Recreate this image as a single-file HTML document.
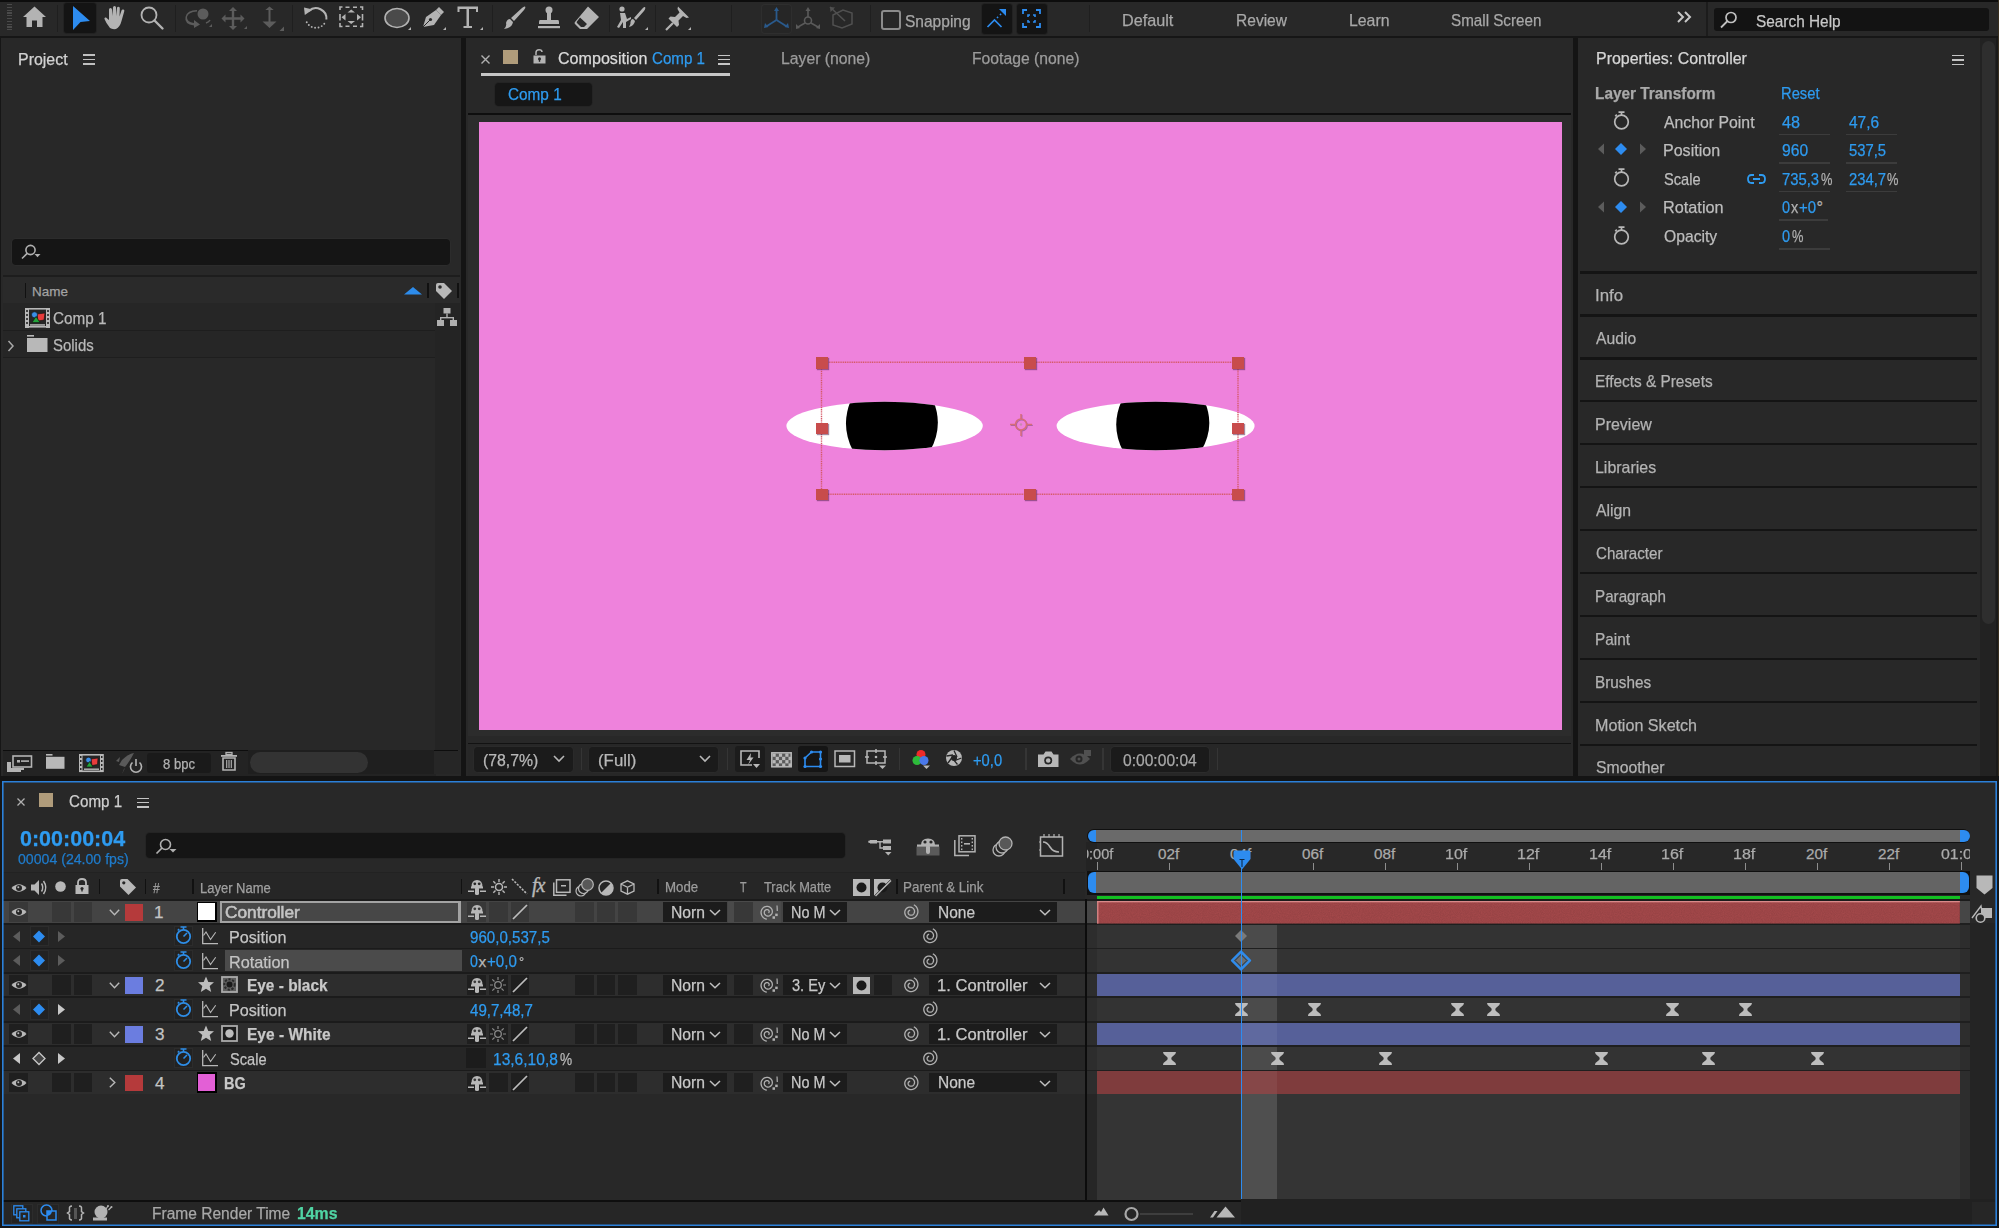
<!DOCTYPE html>
<html><head><meta charset="utf-8"><style>
html,body{margin:0;padding:0;width:1999px;height:1228px;overflow:hidden;background:#161616;}
body{position:relative;font-family:"Liberation Sans",sans-serif;}
.t{position:absolute;white-space:nowrap;line-height:1;transform-origin:0 0;-webkit-text-stroke:0.25px currentColor;}
svg{overflow:visible}
</style></head><body>
<div style="position:absolute;left:0px;top:0px;width:1999px;height:2px;background:#0d0d0d;"></div>
<div style="position:absolute;left:0px;top:2px;width:1999px;height:34px;background:#282828;"></div>
<div style="position:absolute;left:0px;top:36px;width:1999px;height:2px;background:#161616;"></div>
<div style="position:absolute;left:7px;top:4.0px;width:5px;height:1.3px;background:#4a4a4a;"></div>
<div style="position:absolute;left:7px;top:6.8px;width:5px;height:1.3px;background:#4a4a4a;"></div>
<div style="position:absolute;left:7px;top:9.6px;width:5px;height:1.3px;background:#4a4a4a;"></div>
<div style="position:absolute;left:7px;top:12.399999999999999px;width:5px;height:1.3px;background:#4a4a4a;"></div>
<div style="position:absolute;left:7px;top:15.2px;width:5px;height:1.3px;background:#4a4a4a;"></div>
<div style="position:absolute;left:7px;top:18.0px;width:5px;height:1.3px;background:#4a4a4a;"></div>
<div style="position:absolute;left:7px;top:20.799999999999997px;width:5px;height:1.3px;background:#4a4a4a;"></div>
<div style="position:absolute;left:7px;top:23.599999999999998px;width:5px;height:1.3px;background:#4a4a4a;"></div>
<div style="position:absolute;left:7px;top:26.4px;width:5px;height:1.3px;background:#4a4a4a;"></div>
<div style="position:absolute;left:7px;top:29.2px;width:5px;height:1.3px;background:#4a4a4a;"></div>
<div style="position:absolute;left:57px;top:5px;width:1px;height:27px;background:#1f1f1f;"></div>
<div style="position:absolute;left:175px;top:5px;width:1px;height:27px;background:#1f1f1f;"></div>
<div style="position:absolute;left:292px;top:5px;width:1px;height:27px;background:#1f1f1f;"></div>
<div style="position:absolute;left:373px;top:5px;width:1px;height:27px;background:#1f1f1f;"></div>
<div style="position:absolute;left:492px;top:5px;width:1px;height:27px;background:#1f1f1f;"></div>
<div style="position:absolute;left:609px;top:5px;width:1px;height:27px;background:#1f1f1f;"></div>
<div style="position:absolute;left:655px;top:5px;width:1px;height:27px;background:#1f1f1f;"></div>
<div style="position:absolute;left:731px;top:5px;width:1px;height:27px;background:#1f1f1f;"></div>
<div style="position:absolute;left:870px;top:5px;width:1px;height:27px;background:#1f1f1f;"></div>
<div style="position:absolute;left:1089px;top:5px;width:1px;height:27px;background:#1f1f1f;"></div>
<div style="position:absolute;left:1706px;top:5px;width:1px;height:27px;background:#1f1f1f;"></div>
<div style="position:absolute;left:1706px;top:2px;width:2px;height:34px;background:#1c1c1c;"></div>
<svg style="position:absolute;left:22px;top:6px;" width="25" height="22" viewBox="0 0 25 22"><path d="M12.5 0.5 L24 11 L20.5 11 L20.5 21 L15 21 L15 14.5 L10 14.5 L10 21 L4.5 21 L4.5 11 L1 11z" fill="#b3b3b3"/></svg>
<div style="position:absolute;left:64px;top:3px;width:32px;height:30px;background:#141414;border-radius:3px;box-shadow:0 0 0 1px #222;"></div>
<svg style="position:absolute;left:72px;top:6px;" width="19" height="25" viewBox="0 0 19 25"><path d="M1 0 L18 15 L8.5 16 L1 24z" fill="#2d8cf0"/></svg>
<svg style="position:absolute;left:104px;top:6px;" width="23" height="24" viewBox="0 0 23 24"><path d="M6 22 Q2 17 0.5 13 Q0 11 2 11.5 L5 14 L5 3.5 Q5 2 6.5 2 Q8 2 8 3.5 L8.5 10 L9 1.5 Q9 0 10.5 0 Q12 0 12 1.5 L12 10 L13 2 Q13 0.8 14.5 0.8 Q16 1 15.8 2.5 L15.5 10.5 L17.5 4.5 Q18 3 19.5 3.5 Q20.8 4 20.2 5.5 L17.5 15 Q16 21 12 23 Q8 23.5 6 22z" fill="#b3b3b3"/></svg>
<svg style="position:absolute;left:140px;top:6px;" width="24" height="24" viewBox="0 0 24 24"><circle cx="9" cy="9" r="7.5" fill="none" stroke="#b3b3b3" stroke-width="1.8"/><line x1="14.5" y1="14.5" x2="22.5" y2="22.5" stroke="#b3b3b3" stroke-width="2.4" stroke-linecap="round"/></svg>
<svg style="position:absolute;left:185px;top:7px;" width="27" height="22" viewBox="0 0 27 22"><circle cx="18" cy="7" r="5.5" fill="#5c5c5c"/><path d="M12 4.5 Q3 5 2 10 Q1.5 15 9 16 L9 13 L15 17.5 L9 21 L9 18.5 Q-1 17 0.5 10 Q2 3 12 3z" fill="#5c5c5c"/><path d="M21 16 Q24 15 25 13" stroke="#5c5c5c" stroke-width="1.5" fill="none"/><path d="M24 20 l3 0 l0 -3z" fill="#5c5c5c"/></svg>
<svg style="position:absolute;left:222px;top:7px;" width="25" height="24" viewBox="0 0 25 24"><path d="M11 0 L15 4 L12.2 4 L12.2 10.3 L18.5 10.3 L18.5 7.5 L22.5 11.5 L18.5 15.5 L18.5 12.7 L12.2 12.7 L12.2 19 L15 19 L11 23 L7 19 L9.8 19 L9.8 12.7 L3.5 12.7 L3.5 15.5 L-0.5 11.5 L3.5 7.5 L3.5 10.3 L9.8 10.3 L9.8 4 L7 4z" fill="#5c5c5c"/><path d="M22 22 l3 0 l0 -3z" fill="#5c5c5c"/></svg>
<svg style="position:absolute;left:262px;top:6px;" width="23" height="26" viewBox="0 0 23 26"><path d="M3.3 4 L7.5 0.5 L11.7 4z" fill="#5c5c5c"/><rect x="6.5" y="3.5" width="2" height="13" fill="#5c5c5c"/><path d="M0.5 15.5 H14.5 L7.5 22z" fill="#5c5c5c"/><path d="M17.5 25 H22 V20.5z" fill="#5c5c5c"/></svg>
<svg style="position:absolute;left:300px;top:4px;" width="30" height="28" viewBox="0 0 30 28"><g transform="translate(-300,-4)"><path d="M308.8 11 A10.5 10.5 0 0 1 326.4 19.5" fill="none" stroke="#b3b3b3" stroke-width="2"/><path d="M304 7.5 L312.8 9.5 L304.8 15z" fill="#b3b3b3"/><circle cx="324.27" cy="23.76" r="0.95" fill="#b3b3b3"/><circle cx="321.72" cy="26.11" r="0.95" fill="#b3b3b3"/><circle cx="318.54" cy="27.49" r="0.95" fill="#b3b3b3"/><circle cx="315.08" cy="27.76" r="0.95" fill="#b3b3b3"/><circle cx="311.73" cy="26.89" r="0.95" fill="#b3b3b3"/><circle cx="308.84" cy="24.98" r="0.95" fill="#b3b3b3"/><circle cx="306.73" cy="22.23" r="0.95" fill="#b3b3b3"/></g></svg>
<svg style="position:absolute;left:339px;top:6px;" width="25" height="22" viewBox="0 0 25 22"><path d="M1 4 V1 H3.5 M21 1 H23.5 V4 M23.5 17 V20.5 H21 M3.5 20.5 H1 V17" fill="none" stroke="#b3b3b3" stroke-width="1.6"/><path d="M6.5 1.2 H10.5 M14 1.2 H18 M6.5 20.3 H10.5 M14 20.3 H18" stroke="#b3b3b3" stroke-width="1.5"/><path d="M8.5 6.5 L12.2 3.5 L16 6.5z M8.5 15 L12.2 18 L16 15z" fill="#b3b3b3"/><path d="M1 8 V14.5 M23.5 8 V14.5" stroke="#b3b3b3" stroke-width="1.6"/><path d="M6.5 8 L2.5 11.2 L6.5 14.5z M18 8 L22 11.2 L18 14.5z" fill="#b3b3b3"/></svg>
<svg style="position:absolute;left:384px;top:7px;" width="27" height="24" viewBox="0 0 27 24"><ellipse cx="13" cy="11" rx="12" ry="9.5" fill="#4a4a4a" stroke="#b3b3b3" stroke-width="1.6"/><path d="M24 23 l3 0 l0 -3z" fill="#b3b3b3"/></svg>
<svg style="position:absolute;left:421px;top:6px;" width="25" height="25" viewBox="0 0 25 25"><path d="M2 21 L5 11 L15 4 L20 9 L13 19z" fill="#b3b3b3"/><path d="M15 4 L18 1 L23 6 L20 9z" fill="#b3b3b3"/><circle cx="9.5" cy="13.5" r="1.6" fill="#282828"/><line x1="2" y1="21" x2="9" y2="14" stroke="#282828" stroke-width="1"/><path d="M22 24 l3 0 l0 -3z" fill="#b3b3b3"/></svg>
<svg style="position:absolute;left:457px;top:6px;" width="26" height="25" viewBox="0 0 26 25"><path d="M0.5 0.5 H21 V6 H19 V3 H12 V20 H15 V22 H6.5 V20 H9.5 V3 H2.5 V6 H0.5z" fill="#b3b3b3"/><path d="M23 24 l3 0 l0 -3z" fill="#b3b3b3"/></svg>
<svg style="position:absolute;left:503px;top:6px;" width="23" height="24" viewBox="0 0 23 24"><path d="M22 0.5 Q23 1.5 21 4 L11 15 L8 12 L19 2 Q21 0 22 0.5z" fill="#b3b3b3"/><path d="M7 13 L10 16 Q9 22 1 23 Q4 20 3 17 Q4 13 7 13z" fill="#b3b3b3"/></svg>
<svg style="position:absolute;left:537px;top:6px;" width="24" height="24" viewBox="0 0 24 24"><circle cx="12" cy="4" r="3.5" fill="#b3b3b3"/><rect x="10" y="6" width="4" height="8" fill="#b3b3b3"/><path d="M3 14 H21 Q22 14 22 16 V18 H2 V16 Q2 14 3 14z" fill="#b3b3b3"/><rect x="1" y="20" width="22" height="2.2" fill="#b3b3b3"/></svg>
<svg style="position:absolute;left:574px;top:6px;" width="26" height="24" viewBox="0 0 26 24"><path d="M14 0.5 L25 11 L13 23 L6 23 L1 18 Q0 17 1 16z" fill="#b3b3b3"/><path d="M6 11.5 L13 18 L10 21 L7 21 L3 17 Q2.3 16.3 3 15.5z" fill="#282828"/></svg>
<svg style="position:absolute;left:618px;top:6px;" width="30" height="25" viewBox="0 0 30 25"><circle cx="4" cy="3" r="2.6" fill="#b3b3b3"/><path d="M2 7 L7 7 L9 13 L13 11 L13 13 L8 16 L8 22 L5 22 L5 16 L1 22 L-1 21 L3 14z" fill="#b3b3b3"/><path d="M27 1 Q28 2 26 5 L18 14 L16 12 L24 3 Q26 0.5 27 1z" fill="#b3b3b3"/><path d="M15 13 L17 15 Q16 20 11 21 Q13 18 12.5 16 Q13 13 15 13z" fill="#b3b3b3"/><path d="M27 24 l3 0 l0 -3z" fill="#b3b3b3"/></svg>
<svg style="position:absolute;left:665px;top:6px;" width="26" height="25" viewBox="0 0 26 25"><path d="M13 0.5 L24 11.5 L21.5 12 L18 10 L13.5 14.5 L14 19 L12 21 L3.5 12.5 L5.5 10.5 L10 11 L14.5 6.5 L12.5 3z" fill="#b3b3b3"/><line x1="8" y1="17" x2="1" y2="24" stroke="#b3b3b3" stroke-width="2.2"/><path d="M23 24 l3 0 l0 -3z" fill="#b3b3b3"/></svg>
<div style="position:absolute;left:762px;top:5px;width:29px;height:28px;background:#262626;border-radius:3px;box-shadow:0 0 0 1px #2e2e2e;"></div>
<svg style="position:absolute;left:764px;top:7px;" width="25" height="23" viewBox="0 0 25 23"><line x1="12.5" y1="3" x2="12.5" y2="13" stroke="#2a5a8c" stroke-width="1.8"/><line x1="12.5" y1="13" x2="3" y2="19" stroke="#2a5a8c" stroke-width="1.8"/><line x1="12.5" y1="13" x2="22" y2="19" stroke="#2a5a8c" stroke-width="1.8"/><path d="M10 4 L12.5 0 L15 4z M1 16 L0 21 L4.5 20z M24 16 L25 21 L20.5 20z" fill="#2a5a8c"/></svg>
<svg style="position:absolute;left:796px;top:7px;" width="24" height="23" viewBox="0 0 24 23"><line x1="12" y1="3" x2="12" y2="10" stroke="#5a5a5a" stroke-width="1.6"/><circle cx="12" cy="13.5" r="3.5" fill="none" stroke="#5a5a5a" stroke-width="1.6"/><line x1="9" y1="16" x2="2" y2="20" stroke="#5a5a5a" stroke-width="1.6"/><line x1="15" y1="16" x2="22" y2="20" stroke="#5a5a5a" stroke-width="1.6"/><path d="M9.5 4 L12 0 L14.5 4z M0 17 L0 22 L4 21z M24 17 L24 22 L20 21z" fill="#5a5a5a"/></svg>
<svg style="position:absolute;left:830px;top:7px;" width="24" height="23" viewBox="0 0 24 23"><path d="M3 8 L13 3 L22 6 L22 17 L12 21 L3 18z" fill="none" stroke="#505050" stroke-width="1.5"/><line x1="0" y1="0" x2="15" y2="14" stroke="#505050" stroke-width="1.6"/><path d="M0 0 L5 0.5 L0.5 5z" fill="#505050"/></svg>
<div style="position:absolute;left:881.5px;top:11px;width:18px;height:18px;background:transparent;border:2px solid #8c8c8c;border-radius:3px;box-sizing:border-box;width:20px;height:19.5px;left:880.5px;top:10px;"></div>
<div class="t" style="left:905.00px;top:12.50px;font-size:17.39px;font-weight:normal;color:#a8a8a8;transform:scaleX(0.8933);">Snapping</div>
<div style="position:absolute;left:982px;top:4px;width:30px;height:30px;background:#141414;border-radius:3px;box-shadow:0 0 0 1px #222;"></div>
<svg style="position:absolute;left:987px;top:9px;" width="20" height="19" viewBox="0 0 20 19"><path d="M0.5 18 L7.5 11 L14.5 18" fill="none" stroke="#2d8cf0" stroke-width="1.7"/><path d="M10 9 L12 7 M13 6 L14.5 4.5" stroke="#2d8cf0" stroke-width="1.6" stroke-dasharray="1.5 1.5"/><path d="M12 0 L19 0 L19 7z" fill="#2d8cf0"/></svg>
<div style="position:absolute;left:1016.5px;top:4px;width:30px;height:30px;background:#141414;border-radius:3px;box-shadow:0 0 0 1px #222;"></div>
<svg style="position:absolute;left:1022px;top:9px;" width="19" height="19" viewBox="0 0 19 19"><path d="M1 5 V1 H5 M14 1 H18 V5 M18 14 V18 H14 M5 18 H1 V14" fill="none" stroke="#2d8cf0" stroke-width="1.8"/><path d="M6 8 V6 H8 M11 6 H13 V8 M13 11 V13 H11 M8 13 H6 V11" fill="none" stroke="#2d8cf0" stroke-width="1.6"/></svg>
<div class="t" style="left:1122.37px;top:12.30px;font-size:17.39px;font-weight:normal;color:#a8a8a8;transform:scaleX(0.9332);">Default</div>
<div class="t" style="left:1235.60px;top:12.30px;font-size:17.39px;font-weight:normal;color:#a8a8a8;transform:scaleX(0.8950);">Review</div>
<div class="t" style="left:1348.59px;top:12.30px;font-size:17.39px;font-weight:normal;color:#a8a8a8;transform:scaleX(0.9117);">Learn</div>
<div class="t" style="left:1451.00px;top:12.20px;font-size:17.39px;font-weight:normal;color:#a8a8a8;transform:scaleX(0.8747);">Small Screen</div>
<svg style="position:absolute;left:1677px;top:11px;" width="16" height="12" viewBox="0 0 16 12"><path d="M1 1 L6 6 L1 11 M8 1 L13 6 L8 11" fill="none" stroke="#c8c8c8" stroke-width="2"/></svg>
<div style="position:absolute;left:1713.5px;top:7.5px;width:275.5px;height:23.5px;background:#131313;border-radius:3px;"></div>
<svg style="position:absolute;left:1720px;top:11px;" width="18" height="18" viewBox="0 0 18 18"><circle cx="11" cy="6.5" r="5" fill="none" stroke="#c0c0c0" stroke-width="1.7"/><line x1="7.5" y1="10" x2="1" y2="16.5" stroke="#c0c0c0" stroke-width="1.8"/></svg>
<div class="t" style="left:1756.00px;top:13.20px;font-size:17.39px;font-weight:normal;color:#c8c8c8;transform:scaleX(0.8847);">Search Help</div>
<div style="position:absolute;left:1px;top:38px;width:460px;height:738px;background:#282828;"></div>
<div class="t" style="left:18.04px;top:51.50px;font-size:16.67px;font-weight:normal;color:#d2d2d2;transform:scaleX(0.9568);">Project</div>
<div style="position:absolute;left:83px;top:54.0px;width:12px;height:1.6px;background:#c0c0c0;"></div>
<div style="position:absolute;left:83px;top:58.6px;width:12px;height:1.6px;background:#c0c0c0;"></div>
<div style="position:absolute;left:83px;top:63.2px;width:12px;height:1.6px;background:#c0c0c0;"></div>
<div style="position:absolute;left:12px;top:239px;width:438px;height:26px;background:#151515;border-radius:4px;box-shadow:0 0 0 1px #2c2c2c;"></div>
<svg style="position:absolute;left:20px;top:243px;" width="22" height="18" viewBox="0 0 22 18"><circle cx="10.5" cy="7" r="4.6" fill="none" stroke="#b0b0b0" stroke-width="1.6"/><line x1="7.2" y1="10.4" x2="2" y2="15.5" stroke="#b0b0b0" stroke-width="1.6"/><path d="M14.5 11 h6 l-3 3.2z" fill="#b0b0b0"/></svg>
<div style="position:absolute;left:3px;top:275px;width:457px;height:1.5px;background:#1d1d1d;"></div>
<div style="position:absolute;left:3px;top:276.5px;width:457px;height:26.5px;background:#2a2a2a;"></div>
<div style="position:absolute;left:24.5px;top:283px;width:1.6px;height:15px;background:#111;"></div>
<div class="t" style="left:32.00px;top:284.80px;font-size:13.48px;font-weight:normal;color:#a3a3a3;">Name</div>
<svg style="position:absolute;left:404px;top:287px;" width="18" height="8" viewBox="0 0 18 8"><path d="M0 7.5 L9 0 L18 7.5z" fill="#2d8ceb"/></svg>
<div style="position:absolute;left:427px;top:283px;width:1.5px;height:15px;background:#111;"></div>
<svg style="position:absolute;left:435px;top:282px;" width="18" height="18" viewBox="0 0 18 18"><path d="M1 3 Q1 1 3 1 L9 1 L17 9 L9 17 L1 9z" fill="#b8b8b8"/><circle cx="5" cy="5" r="1.8" fill="#2a2a2a"/></svg>
<div style="position:absolute;left:457px;top:283px;width:1.5px;height:15px;background:#111;"></div>
<div style="position:absolute;left:3px;top:303px;width:432px;height:27px;background:#262626;"></div>
<div style="position:absolute;left:3px;top:330px;width:432px;height:1.3px;background:#1e1e1e;"></div>
<div style="position:absolute;left:3px;top:331.3px;width:432px;height:26px;background:#262626;"></div>
<div style="position:absolute;left:3px;top:357px;width:432px;height:1.3px;background:#1e1e1e;"></div>
<div style="position:absolute;left:435px;top:303px;width:25px;height:447px;background:#242424;"></div>
<svg style="position:absolute;left:25px;top:308px;" width="25" height="20" viewBox="0 0 25 20"><rect x="0.8" y="0.8" width="23" height="18" fill="#262626" stroke="#b8b8b8" stroke-width="1.6"/><rect x="0" y="0" width="4" height="20" fill="#b8b8b8"/><rect x="21" y="0" width="4" height="20" fill="#b8b8b8"/><rect x="1.2" y="2" width="1.6" height="2" fill="#262626"/><rect x="22.2" y="2" width="1.6" height="2" fill="#262626"/><rect x="1.2" y="6" width="1.6" height="2" fill="#262626"/><rect x="22.2" y="6" width="1.6" height="2" fill="#262626"/><rect x="1.2" y="10" width="1.6" height="2" fill="#262626"/><rect x="22.2" y="10" width="1.6" height="2" fill="#262626"/><rect x="1.2" y="14" width="1.6" height="2" fill="#262626"/><rect x="22.2" y="14" width="1.6" height="2" fill="#262626"/><rect x="5" y="16.2" width="15" height="1.5" fill="#b8b8b8"/><path d="M12 6 L20 5 L19 12 L13 13z" fill="#e83c3c" stroke="#111" stroke-width="0.6"/><circle cx="9.5" cy="6.8" r="3" fill="#3a8ee6" stroke="#111" stroke-width="0.6"/><path d="M7 14.5 L11 8.5 L15 14.5z" fill="#22a33a" stroke="#111" stroke-width="0.6"/></svg>
<div class="t" style="left:53.00px;top:310.00px;font-size:17.39px;font-weight:normal;color:#b9b9b9;transform:scaleX(0.8808);">Comp 1</div>
<svg style="position:absolute;left:437px;top:308px;" width="20" height="19" viewBox="0 0 20 19"><rect x="6.5" y="0" width="7" height="5.5" fill="#b0b0b0"/><rect x="9.3" y="5.5" width="1.4" height="4" fill="#b0b0b0"/><rect x="3" y="9" width="14" height="1.4" fill="#b0b0b0"/><rect x="3" y="9" width="1.4" height="4" fill="#b0b0b0"/><rect x="15.6" y="9" width="1.4" height="4" fill="#b0b0b0"/><rect x="0" y="12" width="7" height="6" fill="#b0b0b0"/><rect x="13" y="12" width="7" height="6" fill="#b0b0b0"/></svg>
<svg style="position:absolute;left:7px;top:340px;" width="8" height="12" viewBox="0 0 8 12"><path d="M1.5 1 L6 6 L1.5 11" fill="none" stroke="#a8a8a8" stroke-width="1.5"/></svg>
<svg style="position:absolute;left:27px;top:335px;" width="21" height="17" viewBox="0 0 21 17"><rect x="0" y="0" width="7" height="1.6" fill="#b8b8b8"/><rect x="0" y="3" width="20.5" height="14" fill="#b8b8b8"/></svg>
<div class="t" style="left:53.00px;top:337.00px;font-size:17.39px;font-weight:normal;color:#b9b9b9;transform:scaleX(0.8607);">Solids</div>
<div style="position:absolute;left:3px;top:749.5px;width:245px;height:1.8px;background:#0d0d0d;"></div>
<div style="position:absolute;left:434px;top:749.5px;width:24px;height:1.8px;background:#0d0d0d;"></div>
<div style="position:absolute;left:3px;top:751.3px;width:433px;height:25px;background:#232323;"></div>
<div style="position:absolute;left:434px;top:751.3px;width:26px;height:23px;background:#262626;"></div>
<div style="position:absolute;left:248px;top:750px;width:186px;height:24px;background:#1f1f1f;"></div>
<div style="position:absolute;left:250px;top:752px;width:118px;height:21px;background:#333333;border-radius:11px;"></div>
<div style="position:absolute;left:147px;top:753px;width:64px;height:20px;background:#1a1a1a;border-radius:3px;"></div>
<div class="t" style="left:163.00px;top:758.00px;font-size:13.77px;font-weight:normal;color:#b0b0b0;transform:scaleX(0.9478);">8 bpc</div>
<svg style="position:absolute;left:7px;top:755px;" width="26" height="17" viewBox="0 0 26 17"><rect x="6" y="1" width="18.5" height="11" fill="none" stroke="#b3b3b3" stroke-width="1.6"/><rect x="10" y="5" width="3" height="2.5" fill="#b3b3b3"/><rect x="14" y="5.3" width="8" height="1.6" fill="#b3b3b3"/><path d="M0 7 H4 V15 H12 V17 H0z" fill="#b3b3b3"/><rect x="4" y="13" width="13" height="2" fill="#b3b3b3"/><rect x="12" y="15" width="2" height="2" fill="#b3b3b3"/></svg>
<svg style="position:absolute;left:46px;top:754px;" width="19" height="15" viewBox="0 0 19 15"><rect x="0" y="0" width="6.5" height="1.6" fill="#b8b8b8"/><rect x="0" y="2.8" width="18.5" height="12" fill="#b8b8b8"/></svg>
<svg style="position:absolute;left:79px;top:754px;" width="25" height="18" viewBox="0 0 25 18"><rect x="0.8" y="0.8" width="23" height="16.5" fill="#262626" stroke="#b8b8b8" stroke-width="1.6"/><rect x="0" y="0" width="3.5" height="18" fill="#b8b8b8"/><rect x="21" y="0" width="3.5" height="18" fill="#b8b8b8"/><rect x="1" y="2" width="1.5" height="2" fill="#262626"/><rect x="22" y="2" width="1.5" height="2" fill="#262626"/><rect x="1" y="6" width="1.5" height="2" fill="#262626"/><rect x="22" y="6" width="1.5" height="2" fill="#262626"/><rect x="1" y="10" width="1.5" height="2" fill="#262626"/><rect x="22" y="10" width="1.5" height="2" fill="#262626"/><rect x="1" y="14" width="1.5" height="2" fill="#262626"/><rect x="22" y="14" width="1.5" height="2" fill="#262626"/><rect x="5" y="14.5" width="15" height="1.4" fill="#b8b8b8"/><path d="M12 5 L19 4 L18.5 10.5 L13 11.5z" fill="#e83c3c" stroke="#111" stroke-width="0.6"/><circle cx="9.5" cy="6" r="2.8" fill="#3a8ee6" stroke="#111" stroke-width="0.6"/><path d="M7 13 L10.5 7.5 L14 13z" fill="#22a33a" stroke="#111" stroke-width="0.6"/></svg>
<svg style="position:absolute;left:116px;top:753px;" width="26" height="21" viewBox="0 0 26 21"><path d="M18 0 Q12 1 6 7 L3 12 L9 14 Q14 8 18 0z" fill="#5a5a5a"/><path d="M4 4 L0 8 L3 9z M9 15 L6 21 L8 16z" fill="#5a5a5a"/><path d="M16.5 9.5 A5.5 5.5 0 1 0 23.5 9.5" fill="none" stroke="#b3b3b3" stroke-width="1.6"/><line x1="20" y1="6" x2="20" y2="13" stroke="#b3b3b3" stroke-width="1.6"/></svg>
<svg style="position:absolute;left:221px;top:752px;" width="16" height="19" viewBox="0 0 16 19"><rect x="5" y="0.5" width="6" height="2" fill="none" stroke="#b3b3b3" stroke-width="1.3"/><rect x="0" y="3" width="16" height="1.8" fill="#b3b3b3"/><path d="M2 6 H14 V18 H2z" fill="none" stroke="#b3b3b3" stroke-width="1.6"/><path d="M5.7 8 V16 M8 8 V16 M10.3 8 V16" stroke="#b3b3b3" stroke-width="1.1"/></svg>
<div style="position:absolute;left:461px;top:38px;width:5px;height:738px;background:#141414;"></div>
<div style="position:absolute;left:466px;top:38px;width:1107px;height:738px;background:#282828;"></div>
<svg style="position:absolute;left:481px;top:55px;" width="9" height="9" viewBox="0 0 9 9"><path d="M0.5 0.5 L8.5 8.5 M8.5 0.5 L0.5 8.5" stroke="#b0b0b0" stroke-width="1.4"/></svg>
<div style="position:absolute;left:503px;top:50px;width:15px;height:14px;background:#b09c7b;"></div>
<svg style="position:absolute;left:533px;top:49px;" width="13" height="15" viewBox="0 0 13 15"><path d="M3 6 V3.5 Q3 0.8 6 0.8 Q9 0.8 9 3" fill="none" stroke="#b3b3b3" stroke-width="1.5"/><rect x="0.5" y="6.5" width="12" height="8" fill="#b3b3b3"/><circle cx="6.5" cy="9.8" r="1.5" fill="#282828"/><rect x="5.8" y="10" width="1.4" height="2.8" fill="#282828"/></svg>
<div class="t" style="left:558.00px;top:50.30px;font-size:16.23px;font-weight:normal;color:#dadada;transform:scaleX(0.9919);">Composition</div>
<div class="t" style="left:651.50px;top:50.30px;font-size:16.23px;font-weight:normal;color:#2e9bf0;transform:scaleX(0.9336);">Comp 1</div>
<div style="position:absolute;left:718px;top:54.5px;width:12px;height:1.5px;background:#c4c4c4;"></div>
<div style="position:absolute;left:718px;top:58.8px;width:12px;height:1.5px;background:#c4c4c4;"></div>
<div style="position:absolute;left:718px;top:63.1px;width:12px;height:1.5px;background:#c4c4c4;"></div>
<div style="position:absolute;left:481px;top:73px;width:249px;height:3px;background:#c6c6c6;"></div>
<div class="t" style="left:781.03px;top:50.30px;font-size:16.23px;font-weight:normal;color:#9c9c9c;transform:scaleX(0.9718);">Layer (none)</div>
<div class="t" style="left:972.03px;top:50.30px;font-size:16.23px;font-weight:normal;color:#9c9c9c;transform:scaleX(0.9680);">Footage (none)</div>
<div style="position:absolute;left:495px;top:83px;width:97px;height:23px;background:#161616;border-radius:4px;box-shadow:0 0 0 1px #242424;"></div>
<div class="t" style="left:507.50px;top:87.00px;font-size:15.65px;font-weight:normal;color:#2e9bf0;transform:scaleX(0.9803);">Comp 1</div>
<div style="position:absolute;left:468px;top:113px;width:1103px;height:1.7px;background:#0e0e0e;"></div>
<div style="position:absolute;left:468px;top:114.7px;width:1103px;height:621.7px;background:#2c2c2c;"></div>
<div style="position:absolute;left:468px;top:736.4px;width:1103px;height:6.1px;background:#282828;"></div>
<div style="position:absolute;left:479px;top:122px;width:1083px;height:608px;background:#ee82dc;"></div>
<div style="position:absolute;left:468px;top:742.5px;width:1103px;height:1.7px;background:#121212;"></div>
<div style="position:absolute;left:468px;top:744.2px;width:1103px;height:31.8px;background:#272727;"></div>
<svg style="position:absolute;left:760px;top:330px;" width="530" height="200" viewBox="0 0 530 200">
<defs>
<clipPath id="le"><ellipse cx="124.6" cy="96" rx="98.2" ry="24.2"/></clipPath>
<clipPath id="re"><ellipse cx="395.6" cy="96" rx="99" ry="24.2"/></clipPath>
</defs>
<ellipse cx="124.6" cy="96" rx="98.2" ry="24.2" fill="#fff"/>
<path clip-path="url(#le)" d="M91 70 Q80 96 93 121 L170 121 Q184 96 173 70z" fill="#000"/>
<ellipse cx="395.6" cy="96" rx="99" ry="24.2" fill="#fff"/>
<path clip-path="url(#re)" d="M362 70 Q350 96 363 121 L441 121 Q456 96 444 70z" fill="#000"/>
<path d="M61.5 32.3 H478 V164.3 H61.5z" fill="none" stroke="#d55a68" stroke-width="1.4" stroke-dasharray="1.1 0.7"/>
</svg>
<div style="position:absolute;left:816.2px;top:357.2px;width:11.5px;height:11.5px;background:#c84c4c;box-shadow:1px 1px 1px rgba(90,40,80,.55);"></div>
<div style="position:absolute;left:816.2px;top:488.7px;width:11.5px;height:11.5px;background:#c84c4c;box-shadow:1px 1px 1px rgba(90,40,80,.55);"></div>
<div style="position:absolute;left:1024.2px;top:357.2px;width:11.5px;height:11.5px;background:#c84c4c;box-shadow:1px 1px 1px rgba(90,40,80,.55);"></div>
<div style="position:absolute;left:1024.2px;top:488.7px;width:11.5px;height:11.5px;background:#c84c4c;box-shadow:1px 1px 1px rgba(90,40,80,.55);"></div>
<div style="position:absolute;left:1232.2px;top:357.2px;width:11.5px;height:11.5px;background:#c84c4c;box-shadow:1px 1px 1px rgba(90,40,80,.55);"></div>
<div style="position:absolute;left:1232.2px;top:488.7px;width:11.5px;height:11.5px;background:#c84c4c;box-shadow:1px 1px 1px rgba(90,40,80,.55);"></div>
<div style="position:absolute;left:816.2px;top:422.7px;width:11.5px;height:11.5px;background:#c84c4c;box-shadow:1px 1px 1px rgba(90,40,80,.55);"></div>
<div style="position:absolute;left:1232.2px;top:422.7px;width:11.5px;height:11.5px;background:#c84c4c;box-shadow:1px 1px 1px rgba(90,40,80,.55);"></div>
<svg style="position:absolute;left:1008px;top:412px;" width="28" height="28" viewBox="0 0 28 28"><g transform="translate(0.8,0.8)" opacity="0.55"><circle cx="13" cy="12.5" r="5.5" fill="none" stroke="#6a4a80" stroke-width="1.3"/><path d="M13 2 V7 M13 18 V24 M2 12.5 H7.5 M18.5 12.5 H24" stroke="#6a4a80" stroke-width="1.3"/></g><circle cx="13" cy="12.5" r="5.5" fill="none" stroke="#d86c78" stroke-width="1.5"/><path d="M13 2 V7 M13 18 V24 M2 12.5 H7.5 M18.5 12.5 H24" stroke="#d86c78" stroke-width="1.5"/><circle cx="13" cy="12.5" r="1.2" fill="#c98ab0"/></svg>
<div style="position:absolute;left:473.5px;top:747px;width:99px;height:24.5px;background:#1b1b1b;border-radius:4px;box-shadow:0 0 0 1px #2a2a2a;"></div>
<div class="t" style="left:483.00px;top:753.00px;font-size:15.94px;font-weight:normal;color:#b8b8b8;transform:scaleX(0.9910);">(78,7%)</div>
<svg style="position:absolute;left:553px;top:755px;" width="12" height="8" viewBox="0 0 12 8"><path d="M1 1 L6 6 L11 1" fill="none" stroke="#b8b8b8" stroke-width="1.6"/></svg>
<div style="position:absolute;left:580.5px;top:748px;width:1.6px;height:22px;background:#353535;"></div>
<div style="position:absolute;left:589px;top:747px;width:129px;height:24.5px;background:#1b1b1b;border-radius:4px;box-shadow:0 0 0 1px #2a2a2a;"></div>
<div class="t" style="left:598.00px;top:753.00px;font-size:15.94px;font-weight:normal;color:#b8b8b8;transform:scaleX(1.0559);">(Full)</div>
<svg style="position:absolute;left:699px;top:755px;" width="12" height="8" viewBox="0 0 12 8"><path d="M1 1 L6 6 L11 1" fill="none" stroke="#b8b8b8" stroke-width="1.6"/></svg>
<div style="position:absolute;left:726.5px;top:748px;width:1.6px;height:22px;background:#353535;"></div>
<div style="position:absolute;left:734.5px;top:746px;width:30.5px;height:26px;background:#1c1c1c;border-radius:3px;"></div>
<svg style="position:absolute;left:740px;top:750px;" width="21" height="19" viewBox="0 0 21 19"><path d="M12 15 H1 V1 H19 V8" fill="none" stroke="#b8b8b8" stroke-width="1.6"/><path d="M11 3 L6.5 10 L10 10 L8 15 L13.5 7.5 L10.5 7.5z" fill="#b8b8b8"/><path d="M13 14 h7 l-3.5 4z" fill="#b8b8b8"/></svg>
<svg style="position:absolute;left:771px;top:752px;" width="21" height="16" viewBox="0 0 21 16"><rect x="0.8" y="0.8" width="19.4" height="14" fill="#5a5a5a" stroke="#b8b8b8" stroke-width="1.5"/><rect x="1.5" y="1.5" width="3.2" height="3.3" fill="#b8b8b8"/><rect x="1.5" y="8.1" width="3.2" height="3.3" fill="#b8b8b8"/><rect x="4.7" y="4.8" width="3.2" height="3.3" fill="#b8b8b8"/><rect x="4.7" y="11.399999999999999" width="3.2" height="3.3" fill="#b8b8b8"/><rect x="7.9" y="1.5" width="3.2" height="3.3" fill="#b8b8b8"/><rect x="7.9" y="8.1" width="3.2" height="3.3" fill="#b8b8b8"/><rect x="11.100000000000001" y="4.8" width="3.2" height="3.3" fill="#b8b8b8"/><rect x="11.100000000000001" y="11.399999999999999" width="3.2" height="3.3" fill="#b8b8b8"/><rect x="14.3" y="1.5" width="3.2" height="3.3" fill="#b8b8b8"/><rect x="14.3" y="8.1" width="3.2" height="3.3" fill="#b8b8b8"/><rect x="17.5" y="4.8" width="3.2" height="3.3" fill="#b8b8b8"/><rect x="17.5" y="11.399999999999999" width="3.2" height="3.3" fill="#b8b8b8"/></svg>
<div style="position:absolute;left:798px;top:746px;width:29.5px;height:26px;background:#151515;border-radius:3px;"></div>
<svg style="position:absolute;left:803px;top:750px;" width="20" height="18" viewBox="0 0 20 18"><path d="M2 16.5 L2 8 L8.5 2 L17.5 2 L17.5 16.5z" fill="none" stroke="#2d8cf0" stroke-width="1.6"/><circle cx="2" cy="16.5" r="1.6" fill="#2d8cf0"/><circle cx="2" cy="8" r="1.6" fill="#2d8cf0"/><circle cx="8.5" cy="2" r="1.6" fill="#2d8cf0"/><circle cx="17.5" cy="2" r="1.6" fill="#2d8cf0"/><circle cx="17.5" cy="9" r="1.6" fill="#2d8cf0"/><circle cx="17.5" cy="16.5" r="1.6" fill="#2d8cf0"/></svg>
<svg style="position:absolute;left:834px;top:750px;" width="22" height="18" viewBox="0 0 22 18"><rect x="1" y="1" width="19.5" height="15.5" fill="none" stroke="#b8b8b8" stroke-width="1.5"/><rect x="5" y="5" width="11.5" height="7.5" fill="#b8b8b8"/></svg>
<svg style="position:absolute;left:865px;top:749px;" width="22" height="21" viewBox="0 0 22 21"><rect x="2" y="2" width="18" height="12" fill="none" stroke="#b8b8b8" stroke-width="1.5"/><path d="M11 0 V4 M11 12 V16 M0 8 H4 M18 8 H22" stroke="#b8b8b8" stroke-width="1.5"/><circle cx="11" cy="8" r="1.3" fill="#b8b8b8"/><path d="M14 16.5 h7 l-3.5 3.5z" fill="#b8b8b8"/></svg>
<div style="position:absolute;left:898.5px;top:748px;width:1.6px;height:22px;background:#353535;"></div>
<svg style="position:absolute;left:912px;top:749px;" width="20" height="21" viewBox="0 0 20 21"><circle cx="9" cy="5.5" r="4.5" fill="#ee2a2a"/><circle cx="5" cy="11.5" r="4.5" fill="#2dbb3a"/><circle cx="12" cy="11.5" r="4.5" fill="#4a78ea"/><path d="M11 16.5 h7 l-3.5 3.5z" fill="#b8b8b8"/></svg>
<svg style="position:absolute;left:945px;top:749px;" width="18" height="18" viewBox="0 0 18 18"><circle cx="9" cy="9" r="8" fill="#b8b8b8"/><path d="M9 1.5 L12 8 M16.5 9 L10 11.5 M12.5 15.5 L8 10 M3 14 L7 8.5 M1.5 7 L8 6" stroke="#262626" stroke-width="1.3"/><circle cx="9" cy="9" r="3" fill="#262626"/></svg>
<div class="t" style="left:973.00px;top:752.00px;font-size:16.38px;font-weight:normal;color:#2e9bf0;transform:scaleX(0.9007);">+0,0</div>
<div style="position:absolute;left:1025px;top:748px;width:1.6px;height:22px;background:#353535;"></div>
<svg style="position:absolute;left:1038px;top:751px;" width="21" height="16" viewBox="0 0 21 16"><path d="M0 3.5 H5.5 L7.5 0.5 H13.5 L15.5 3.5 H20.5 V16 H0z" fill="#b8b8b8"/><circle cx="10.2" cy="9.5" r="4" fill="#262626"/><circle cx="10.2" cy="9.5" r="2.3" fill="#b8b8b8"/></svg>
<svg style="position:absolute;left:1069px;top:748px;" width="22" height="19" viewBox="0 0 22 19"><path d="M1 11 Q11 0 21 11 Q11 22 1 11z" fill="#505050"/><circle cx="10" cy="11" r="3.5" fill="#262626"/><circle cx="10" cy="11" r="1.5" fill="#505050"/><rect x="15" y="2" width="7" height="6" fill="#505050"/></svg>
<div style="position:absolute;left:1102px;top:748px;width:1.6px;height:22px;background:#353535;"></div>
<div style="position:absolute;left:1111px;top:747px;width:98px;height:25px;background:#1b1b1b;border-radius:4px;box-shadow:0 0 0 1px #2c2c2c;"></div>
<div class="t" style="left:1123.00px;top:753.00px;font-size:16.67px;font-weight:normal;color:#a9a9a9;transform:scaleX(0.9367);">0:00:00:04</div>
<div style="position:absolute;left:1216.5px;top:748px;width:1.6px;height:22px;background:#353535;"></div>
<div style="position:absolute;left:1573px;top:38px;width:5px;height:738px;background:#141414;"></div>
<div style="position:absolute;left:1578px;top:38px;width:421px;height:738px;background:#282828;"></div>
<div class="t" style="left:1595.52px;top:50.30px;font-size:16.23px;font-weight:normal;color:#d6d6d6;transform:scaleX(0.9847);">Properties: Controller</div>
<div style="position:absolute;left:1951.5px;top:54.5px;width:12px;height:1.6px;background:#c4c4c4;"></div>
<div style="position:absolute;left:1951.5px;top:59.0px;width:12px;height:1.6px;background:#c4c4c4;"></div>
<div style="position:absolute;left:1951.5px;top:63.5px;width:12px;height:1.6px;background:#c4c4c4;"></div>
<div class="t" style="left:1594.56px;top:84.70px;font-size:16.38px;font-weight:bold;color:#a9a9a9;transform:scaleX(0.9396);">Layer Transform</div>
<div class="t" style="left:1781.10px;top:84.70px;font-size:16.38px;font-weight:normal;color:#2e9bf0;transform:scaleX(0.9007);">Reset</div>
<svg style="position:absolute;left:1612.5px;top:111.0px;" width="17" height="19" viewBox="0 0 17 19"><circle cx="8.5" cy="11" r="6.8" fill="none" stroke="#b8b8b8" stroke-width="1.7"/><path d="M5.5 1.2 H11.5 M8.5 1.2 V4" stroke="#b8b8b8" stroke-width="1.7"/><path d="M2.2 5.2 L3.8 3.6" stroke="#b8b8b8" stroke-width="1.6"/></svg>
<div class="t" style="left:1663.50px;top:113.50px;font-size:16.38px;font-weight:normal;color:#bdbdbd;transform:scaleX(0.9668);">Anchor Point</div>
<svg style="position:absolute;left:1598px;top:143.39999999999998px;" width="48" height="12" viewBox="0 0 48 12"><path d="M0 6 L6 0.5 V11.5z" fill="#5c5c5c"/><path d="M17 6 L23 0 L29 6 L23 12z" fill="#2d8cf0"/><path d="M42 0.5 L48 6 L42 11.5z" fill="#5c5c5c"/></svg>
<div class="t" style="left:1662.52px;top:142.20px;font-size:16.38px;font-weight:normal;color:#bdbdbd;transform:scaleX(0.9807);">Position</div>
<svg style="position:absolute;left:1612.5px;top:168.3px;" width="17" height="19" viewBox="0 0 17 19"><circle cx="8.5" cy="11" r="6.8" fill="none" stroke="#b8b8b8" stroke-width="1.7"/><path d="M5.5 1.2 H11.5 M8.5 1.2 V4" stroke="#b8b8b8" stroke-width="1.7"/><path d="M2.2 5.2 L3.8 3.6" stroke="#b8b8b8" stroke-width="1.6"/></svg>
<div class="t" style="left:1663.50px;top:170.80px;font-size:16.38px;font-weight:normal;color:#bdbdbd;transform:scaleX(0.8941);">Scale</div>
<svg style="position:absolute;left:1598px;top:200.6px;" width="48" height="12" viewBox="0 0 48 12"><path d="M0 6 L6 0.5 V11.5z" fill="#5c5c5c"/><path d="M17 6 L23 0 L29 6 L23 12z" fill="#2d8cf0"/><path d="M42 0.5 L48 6 L42 11.5z" fill="#5c5c5c"/></svg>
<div class="t" style="left:1662.51px;top:199.40px;font-size:16.38px;font-weight:normal;color:#bdbdbd;transform:scaleX(0.9944);">Rotation</div>
<svg style="position:absolute;left:1612.5px;top:225.5px;" width="17" height="19" viewBox="0 0 17 19"><circle cx="8.5" cy="11" r="6.8" fill="none" stroke="#b8b8b8" stroke-width="1.7"/><path d="M5.5 1.2 H11.5 M8.5 1.2 V4" stroke="#b8b8b8" stroke-width="1.7"/><path d="M2.2 5.2 L3.8 3.6" stroke="#b8b8b8" stroke-width="1.6"/></svg>
<div class="t" style="left:1663.50px;top:228.00px;font-size:16.38px;font-weight:normal;color:#bdbdbd;transform:scaleX(0.9595);">Opacity</div>
<div style="position:absolute;left:1779px;top:133.5px;width:51px;height:1.5px;background:#3c3c3c;"></div>
<div style="position:absolute;left:1846px;top:133.5px;width:51px;height:1.5px;background:#3c3c3c;"></div>
<div style="position:absolute;left:1779px;top:162.2px;width:51px;height:1.5px;background:#3c3c3c;"></div>
<div style="position:absolute;left:1846px;top:162.2px;width:51px;height:1.5px;background:#3c3c3c;"></div>
<div style="position:absolute;left:1779px;top:190.8px;width:51px;height:1.5px;background:#3c3c3c;"></div>
<div style="position:absolute;left:1846px;top:190.8px;width:51px;height:1.5px;background:#3c3c3c;"></div>
<div style="position:absolute;left:1779px;top:219.4px;width:49px;height:1.5px;background:#3c3c3c;"></div>
<div style="position:absolute;left:1779px;top:248px;width:51px;height:1.5px;background:#3c3c3c;"></div>
<div class="t" style="left:1782.00px;top:113.50px;font-size:16.38px;font-weight:normal;color:#2e9bf0;transform:scaleX(0.9946);">48</div>
<div class="t" style="left:1848.50px;top:113.50px;font-size:16.38px;font-weight:normal;color:#2e9bf0;transform:scaleX(0.9451);">47,6</div>
<div class="t" style="left:1782.00px;top:142.20px;font-size:16.38px;font-weight:normal;color:#2e9bf0;transform:scaleX(0.9560);">960</div>
<div class="t" style="left:1848.50px;top:142.20px;font-size:16.38px;font-weight:normal;color:#2e9bf0;transform:scaleX(0.9060);">537,5</div>
<div class="t" style="left:1782.00px;top:170.80px;font-size:16.38px;font-weight:normal;color:#2e9bf0;transform:scaleX(0.9060);">735,3</div>
<div class="t" style="left:1820.50px;top:170.80px;font-size:16.38px;font-weight:normal;color:#b0b0b0;transform:scaleX(0.7857);">%</div>
<div class="t" style="left:1848.50px;top:170.80px;font-size:16.38px;font-weight:normal;color:#2e9bf0;transform:scaleX(0.9060);">234,7</div>
<div class="t" style="left:1887.00px;top:170.80px;font-size:16.38px;font-weight:normal;color:#b0b0b0;transform:scaleX(0.7857);">%</div>
<svg style="position:absolute;left:1747px;top:174px;" width="19" height="10" viewBox="0 0 19 10"><path d="M7 1 H4.5 Q1 1 1 5 Q1 9 4.5 9 H7 M12 1 H14.5 Q18 1 18 5 Q18 9 14.5 9 H12 M6 5 H13" fill="none" stroke="#2e9bf0" stroke-width="1.8"/></svg>
<div class="t" style="left:1782.00px;top:199.40px;font-size:16.38px;font-weight:normal;color:#2e9bf0;transform:scaleX(0.8889);">0</div>
<div class="t" style="left:1791.00px;top:199.40px;font-size:16.40px;font-weight:normal;color:#b0b0b0;transform:scaleX(0.8889);">x</div>
<div class="t" style="left:1799.00px;top:199.40px;font-size:16.38px;font-weight:normal;color:#2e9bf0;transform:scaleX(0.9163);">+0</div>
<div class="t" style="left:1816.50px;top:199.40px;font-size:16.40px;font-weight:normal;color:#b0b0b0;">°</div>
<div class="t" style="left:1782.00px;top:228.00px;font-size:16.38px;font-weight:normal;color:#2e9bf0;transform:scaleX(0.8889);">0</div>
<div class="t" style="left:1792.00px;top:228.00px;font-size:16.38px;font-weight:normal;color:#b0b0b0;transform:scaleX(0.7857);">%</div>
<div style="position:absolute;left:1580px;top:271.2px;width:397px;height:2.6px;background:#141414;"></div>
<div class="t" style="left:1595.27px;top:287.00px;font-size:16.38px;font-weight:normal;color:#b3b3b3;transform:scaleX(1.0310);">Info</div>
<div style="position:absolute;left:1580px;top:314.0px;width:397px;height:2.6px;background:#141414;"></div>
<div class="t" style="left:1596.30px;top:329.95px;font-size:16.38px;font-weight:normal;color:#b3b3b3;transform:scaleX(0.9583);">Audio</div>
<div style="position:absolute;left:1580px;top:356.95px;width:397px;height:2.6px;background:#141414;"></div>
<div class="t" style="left:1595.36px;top:372.90px;font-size:16.38px;font-weight:normal;color:#b3b3b3;transform:scaleX(0.9396);">Effects &amp; Presets</div>
<div style="position:absolute;left:1580px;top:399.9px;width:397px;height:2.6px;background:#141414;"></div>
<div class="t" style="left:1595.32px;top:415.85px;font-size:16.38px;font-weight:normal;color:#b3b3b3;transform:scaleX(0.9761);">Preview</div>
<div style="position:absolute;left:1580px;top:442.85px;width:397px;height:2.6px;background:#141414;"></div>
<div class="t" style="left:1595.33px;top:458.80px;font-size:16.38px;font-weight:normal;color:#b3b3b3;transform:scaleX(0.9747);">Libraries</div>
<div style="position:absolute;left:1580px;top:485.8px;width:397px;height:2.6px;background:#141414;"></div>
<div class="t" style="left:1596.30px;top:501.75px;font-size:16.38px;font-weight:normal;color:#b3b3b3;transform:scaleX(0.9647);">Align</div>
<div style="position:absolute;left:1580px;top:528.75px;width:397px;height:2.6px;background:#141414;"></div>
<div class="t" style="left:1596.30px;top:544.70px;font-size:16.38px;font-weight:normal;color:#b3b3b3;transform:scaleX(0.9257);">Character</div>
<div style="position:absolute;left:1580px;top:571.7px;width:397px;height:2.6px;background:#141414;"></div>
<div class="t" style="left:1595.37px;top:587.65px;font-size:16.38px;font-weight:normal;color:#b3b3b3;transform:scaleX(0.9296);">Paragraph</div>
<div style="position:absolute;left:1580px;top:614.6500000000001px;width:397px;height:2.6px;background:#141414;"></div>
<div class="t" style="left:1595.36px;top:630.60px;font-size:16.38px;font-weight:normal;color:#b3b3b3;transform:scaleX(0.9390);">Paint</div>
<div style="position:absolute;left:1580px;top:657.6px;width:397px;height:2.6px;background:#141414;"></div>
<div class="t" style="left:1595.37px;top:673.55px;font-size:16.38px;font-weight:normal;color:#b3b3b3;transform:scaleX(0.9348);">Brushes</div>
<div style="position:absolute;left:1580px;top:700.55px;width:397px;height:2.6px;background:#141414;"></div>
<div class="t" style="left:1595.32px;top:716.50px;font-size:16.38px;font-weight:normal;color:#b3b3b3;transform:scaleX(0.9848);">Motion Sketch</div>
<div style="position:absolute;left:1580px;top:743.5px;width:397px;height:2.6px;background:#141414;"></div>
<div class="t" style="left:1596.30px;top:759.45px;font-size:16.38px;font-weight:normal;color:#b3b3b3;transform:scaleX(0.9653);">Smoother</div>
<div style="position:absolute;left:1580px;top:786.45px;width:397px;height:2.6px;background:#141414;"></div>
<div style="position:absolute;left:1980px;top:38px;width:16px;height:738px;background:#222222;"></div>
<div style="position:absolute;left:1981.5px;top:41px;width:13px;height:583px;background:#2e2e2e;border-radius:7px;"></div>
<div style="position:absolute;left:1996px;top:38px;width:3px;height:738px;background:#1a1a1a;"></div>
<div style="position:absolute;left:1998px;top:0px;width:1px;height:1228px;background:#3a3020;"></div>
<div style="position:absolute;left:0px;top:776px;width:1999px;height:6px;background:#141414;"></div>
<div style="position:absolute;left:0px;top:781px;width:1999px;height:447px;background:#161616;"></div>
<div style="position:absolute;left:1.5px;top:781.3px;width:1995px;height:444.7px;background:#282828;"></div>
<svg style="position:absolute;left:17px;top:798px;" width="8" height="8" viewBox="0 0 8 8"><path d="M0.5 0.5 L7.5 7.5 M7.5 0.5 L0.5 7.5" stroke="#b0b0b0" stroke-width="1.3"/></svg>
<div style="position:absolute;left:39px;top:793px;width:14px;height:14px;background:#b09c7b;"></div>
<div class="t" style="left:69.00px;top:793.00px;font-size:16.38px;font-weight:normal;color:#cfcfcf;transform:scaleX(0.9268);">Comp 1</div>
<div style="position:absolute;left:137px;top:797.5px;width:12px;height:1.5px;background:#c4c4c4;"></div>
<div style="position:absolute;left:137px;top:801.9px;width:12px;height:1.5px;background:#c4c4c4;"></div>
<div style="position:absolute;left:137px;top:806.3px;width:12px;height:1.5px;background:#c4c4c4;"></div>
<div class="t" style="left:20.00px;top:828.00px;font-size:21.74px;font-weight:bold;color:#2e9bf0;transform:scaleX(0.9890);">0:00:00:04</div>
<div class="t" style="left:17.50px;top:851.00px;font-size:15.22px;font-weight:normal;color:#1f7ccc;transform:scaleX(0.9277);">00004 (24.00 fps)</div>
<div style="position:absolute;left:146px;top:833.3px;width:699px;height:25.2px;background:#151515;border-radius:4px;box-shadow:0 0 0 1px #242424;"></div>
<svg style="position:absolute;left:155px;top:838px;" width="26" height="17" viewBox="0 0 26 17"><circle cx="10.5" cy="6.5" r="5" fill="none" stroke="#b0b0b0" stroke-width="1.6"/><line x1="7" y1="10" x2="1.5" y2="15.5" stroke="#b0b0b0" stroke-width="1.7"/><path d="M14.5 11 h7 l-3.5 3.5z" fill="#b0b0b0"/></svg>
<svg style="position:absolute;left:868px;top:838px;" width="25" height="20" viewBox="0 0 25 20"><rect x="2" y="2" width="7" height="3.5" fill="#b3b3b3"/><rect x="15" y="1.5" width="8" height="4" fill="#b3b3b3"/><rect x="15" y="8" width="8" height="4" fill="#b3b3b3"/><path d="M9 3.8 H15 M12 3.8 V10 H15" fill="none" stroke="#b3b3b3" stroke-width="1.4"/><circle cx="1.5" cy="3.8" r="1.3" fill="#b3b3b3"/><path d="M17 14 h6.5 l-3.25 3.5z" fill="#b3b3b3"/></svg>
<svg style="position:absolute;left:916px;top:837px;" width="24" height="19" viewBox="0 0 24 19"><path d="M5 8 Q5 1.5 12 1.5 Q19 1.5 19 8z" fill="#b3b3b3"/><rect x="0.5" y="9.5" width="23" height="9" fill="#5a5a5a"/><rect x="10" y="8" width="4" height="9" rx="2" fill="#b3b3b3"/><rect x="1" y="7.5" width="22" height="2.2" fill="#b3b3b3"/><circle cx="9" cy="5" r="1.6" fill="#282828"/><circle cx="15" cy="5" r="1.6" fill="#282828"/></svg>
<svg style="position:absolute;left:954px;top:835px;" width="22" height="22" viewBox="0 0 22 22"><rect x="5" y="0.8" width="16" height="16" fill="#282828" stroke="#b3b3b3" stroke-width="1.5"/><path d="M0.8 5 V20.5 H15" fill="none" stroke="#b3b3b3" stroke-width="1.5"/><rect x="10" y="8" width="6" height="1.6" fill="#b3b3b3"/><rect x="7" y="3.0" width="1.4" height="1.6" fill="#b3b3b3"/><rect x="17.6" y="3.0" width="1.4" height="1.6" fill="#b3b3b3"/><rect x="7" y="6.5" width="1.4" height="1.6" fill="#b3b3b3"/><rect x="17.6" y="6.5" width="1.4" height="1.6" fill="#b3b3b3"/><rect x="7" y="10.0" width="1.4" height="1.6" fill="#b3b3b3"/><rect x="17.6" y="10.0" width="1.4" height="1.6" fill="#b3b3b3"/><rect x="7" y="13.5" width="1.4" height="1.6" fill="#b3b3b3"/><rect x="17.6" y="13.5" width="1.4" height="1.6" fill="#b3b3b3"/></svg>
<svg style="position:absolute;left:992px;top:836px;" width="21" height="21" viewBox="0 0 21 21"><circle cx="7" cy="14" r="6" fill="none" stroke="#b3b3b3" stroke-width="1.3"/><circle cx="10" cy="11" r="6" fill="#282828" stroke="#b3b3b3" stroke-width="1.3"/><circle cx="13.5" cy="7.5" r="6.5" fill="#585858" stroke="#b3b3b3" stroke-width="1.3"/></svg>
<svg style="position:absolute;left:1039px;top:834px;" width="25" height="23" viewBox="0 0 25 23"><rect x="1.5" y="3" width="22" height="19" fill="none" stroke="#b3b3b3" stroke-width="1.5"/><path d="M4 8 Q8 8 11 13 Q14 18 20 18" fill="none" stroke="#b3b3b3" stroke-width="1.6"/><path d="M5 0 V3 M10 0 V3 M15 0 V3 M20 0 V3 M0 8 H1.5 M0 16 H1.5" stroke="#b3b3b3" stroke-width="1.2"/></svg>
<div style="position:absolute;left:3px;top:871.5px;width:1082px;height:1px;background:#222;"></div>
<div style="position:absolute;left:3px;top:872.5px;width:1082px;height:26.8px;background:#262626;"></div>
<svg style="position:absolute;left:11px;top:883px;" width="16" height="10" viewBox="0 0 16 10"><path d="M0.5 5 Q8 -2.5 15.5 5 Q8 12.5 0.5 5z" fill="#b8b8b8"/><circle cx="8" cy="5" r="3" fill="#262626"/><circle cx="7.3" cy="4.3" r="1" fill="#b8b8b8"/></svg>
<svg style="position:absolute;left:31px;top:879px;" width="17" height="17" viewBox="0 0 17 17"><path d="M0 5.5 H3.5 L8 1 V16 L3.5 11.5 H0z" fill="#b8b8b8"/><path d="M10.5 4.5 Q13 8.5 10.5 12.5 M12.5 2 Q17 8.5 12.5 15" fill="none" stroke="#b8b8b8" stroke-width="1.5"/></svg>
<svg style="position:absolute;left:55px;top:881px;" width="11" height="11" viewBox="0 0 11 11"><circle cx="5.5" cy="5.5" r="5.3" fill="#b8b8b8"/></svg>
<svg style="position:absolute;left:75px;top:878px;" width="14" height="16" viewBox="0 0 14 16"><path d="M3 7 V4.5 Q3 1 7 1 Q11 1 11 4.5 V7" fill="none" stroke="#b8b8b8" stroke-width="1.8"/><rect x="0.5" y="7" width="13" height="9" fill="#b8b8b8"/><circle cx="7" cy="10.5" r="1.6" fill="#262626"/><rect x="6.3" y="10.5" width="1.4" height="3" fill="#262626"/></svg>
<div style="position:absolute;left:98.5px;top:879px;width:1.5px;height:15px;background:#111;"></div>
<svg style="position:absolute;left:119px;top:878px;" width="18" height="18" viewBox="0 0 18 18"><path d="M1 3 Q1 1 3 1 L8.5 1 L17 9.5 L9.5 17 L1 8.5z" fill="#b8b8b8"/><circle cx="4.8" cy="4.8" r="1.6" fill="#262626"/></svg>
<div style="position:absolute;left:144.5px;top:879px;width:1.5px;height:15px;background:#111;"></div>
<div class="t" style="left:153.00px;top:881.50px;font-size:13.77px;font-weight:normal;color:#9c9c9c;transform:scaleX(0.8750);">#</div>
<div style="position:absolute;left:192px;top:879px;width:1.5px;height:15px;background:#111;"></div>
<div class="t" style="left:200.06px;top:881.50px;font-size:13.77px;font-weight:normal;color:#a0a0a0;transform:scaleX(0.9428);">Layer Name</div>
<div style="position:absolute;left:460.5px;top:879px;width:1.5px;height:15px;background:#111;"></div>
<svg style="position:absolute;left:468px;top:879px;" width="18" height="16" viewBox="0 0 18 16"><path d="M3.5 8 Q3.5 1 9 1 Q14.5 1 14.5 8z" fill="#b8b8b8"/><rect x="0" y="11.5" width="6" height="1.5" fill="#b8b8b8"/><rect x="12" y="11.5" width="6" height="1.5" fill="#b8b8b8"/><rect x="3" y="7.5" width="12" height="2" fill="#b8b8b8"/><rect x="7" y="8" width="4" height="8" rx="1.5" fill="#b8b8b8"/><circle cx="6.8" cy="4.8" r="1.4" fill="#262626"/><circle cx="11.2" cy="4.8" r="1.4" fill="#262626"/></svg>
<svg style="position:absolute;left:491px;top:879px;" width="16" height="16" viewBox="0 0 16 16"><circle cx="8" cy="8" r="3.5" fill="none" stroke="#b8b8b8" stroke-width="1.5"/><path d="M8 0 V3 M8 13 V16 M0 8 H3 M13 8 H16 M2.3 2.3 L4.5 4.5 M11.5 11.5 L13.7 13.7 M13.7 2.3 L11.5 4.5 M4.5 11.5 L2.3 13.7" stroke="#b8b8b8" stroke-width="1.4"/></svg>
<svg style="position:absolute;left:511px;top:878px;" width="17" height="17" viewBox="0 0 17 17"><path d="M1 1 L16 16" stroke="#b8b8b8" stroke-width="1.6" stroke-dasharray="2.2 1.3"/></svg>
<div style="position:absolute;left:532px;top:875px;font-family:'Liberation Serif';font-style:italic;font-size:20px;line-height:20px;color:#b8b8b8;-webkit-text-stroke:0.4px #b8b8b8;letter-spacing:-1px">fx</div>
<svg style="position:absolute;left:553px;top:879px;" width="18" height="17" viewBox="0 0 18 17"><rect x="3.5" y="0.8" width="13.5" height="12.5" fill="#262626" stroke="#b8b8b8" stroke-width="1.5"/><path d="M0.8 3.5 V16.2 H13.5" fill="none" stroke="#b8b8b8" stroke-width="1.5"/><rect x="8" y="6" width="5" height="1.5" fill="#b8b8b8"/></svg>
<svg style="position:absolute;left:575px;top:878px;" width="19" height="19" viewBox="0 0 19 19"><circle cx="6" cy="13" r="5" fill="none" stroke="#b8b8b8" stroke-width="1.2"/><circle cx="8.5" cy="10.5" r="5" fill="#262626" stroke="#b8b8b8" stroke-width="1.2"/><circle cx="12.5" cy="6.5" r="5.8" fill="#585858" stroke="#b8b8b8" stroke-width="1.2"/></svg>
<svg style="position:absolute;left:598px;top:880px;" width="16" height="16" viewBox="0 0 16 16"><circle cx="8" cy="8" r="7" fill="none" stroke="#b8b8b8" stroke-width="1.5"/><path d="M13 3 A7 7 0 0 1 3 13z" fill="#b8b8b8"/></svg>
<svg style="position:absolute;left:620px;top:880px;" width="15" height="15" viewBox="0 0 15 15"><path d="M7.5 0.8 L14 4 V11 L7.5 14.2 L1 11 V4z M1 4 L7.5 7.3 L14 4 M7.5 7.3 V14.2" fill="none" stroke="#b8b8b8" stroke-width="1.3"/></svg>
<div style="position:absolute;left:657px;top:879px;width:1.5px;height:15px;background:#111;"></div>
<div class="t" style="left:665.04px;top:880.80px;font-size:13.77px;font-weight:normal;color:#9c9c9c;transform:scaleX(0.9630);">Mode</div>
<div class="t" style="left:740.00px;top:880.80px;font-size:13.77px;font-weight:normal;color:#9c9c9c;transform:scaleX(0.7778);">T</div>
<div class="t" style="left:764.00px;top:880.80px;font-size:13.77px;font-weight:normal;color:#9c9c9c;transform:scaleX(0.9320);">Track Matte</div>
<svg style="position:absolute;left:853px;top:879px;" width="17" height="17" viewBox="0 0 17 17"><rect width="17" height="17" fill="#b8b8b8"/><circle cx="8.5" cy="8.5" r="5" fill="#1a1a1a"/></svg>
<svg style="position:absolute;left:874px;top:879px;" width="17" height="17" viewBox="0 0 17 17"><path d="M0 17 V0 H17z" fill="#b8b8b8"/><path d="M1 17 L17 1 V0 L0 17z" fill="#262626"/><circle cx="8.5" cy="8.5" r="5" fill="#1a1a1a"/><path d="M1.5 17 L17 1.5" stroke="#b8b8b8" stroke-width="1.5"/></svg>
<div style="position:absolute;left:896px;top:879px;width:1.5px;height:15px;background:#111;"></div>
<div class="t" style="left:902.53px;top:880.80px;font-size:13.77px;font-weight:normal;color:#9c9c9c;transform:scaleX(0.9734);">Parent &amp; Link</div>
<div style="position:absolute;left:1063px;top:879px;width:1.5px;height:15px;background:#111;"></div>
<div style="position:absolute;left:3px;top:899.3px;width:1082px;height:1.3px;background:#1b1b1b;"></div>
<div style="position:absolute;left:3px;top:900.6px;width:1082px;height:22.6px;background:#444444;"></div>
<div style="position:absolute;left:3px;top:923.2px;width:1082px;height:1.7899999999999991px;background:#1b1b1b;"></div>
<div style="position:absolute;left:3px;top:924.99px;width:1082px;height:22.6px;background:#262626;"></div>
<div style="position:absolute;left:3px;top:947.59px;width:1082px;height:1.7899999999999991px;background:#1b1b1b;"></div>
<div style="position:absolute;left:3px;top:949.38px;width:1082px;height:22.6px;background:#262626;"></div>
<div style="position:absolute;left:3px;top:971.98px;width:1082px;height:1.7899999999999991px;background:#1b1b1b;"></div>
<div style="position:absolute;left:3px;top:973.77px;width:1082px;height:22.6px;background:#2d2d2d;"></div>
<div style="position:absolute;left:3px;top:996.37px;width:1082px;height:1.7899999999999991px;background:#1b1b1b;"></div>
<div style="position:absolute;left:3px;top:998.1600000000001px;width:1082px;height:22.6px;background:#262626;"></div>
<div style="position:absolute;left:3px;top:1020.7600000000001px;width:1082px;height:1.7899999999999991px;background:#1b1b1b;"></div>
<div style="position:absolute;left:3px;top:1022.5500000000001px;width:1082px;height:22.6px;background:#2d2d2d;"></div>
<div style="position:absolute;left:3px;top:1045.15px;width:1082px;height:1.7899999999999991px;background:#1b1b1b;"></div>
<div style="position:absolute;left:3px;top:1046.94px;width:1082px;height:22.6px;background:#262626;"></div>
<div style="position:absolute;left:3px;top:1069.54px;width:1082px;height:1.7899999999999991px;background:#1b1b1b;"></div>
<div style="position:absolute;left:3px;top:1071.33px;width:1082px;height:22.6px;background:#2d2d2d;"></div>
<div style="position:absolute;left:3px;top:1093.9299999999998px;width:1082px;height:106.07000000000016px;background:#282828;"></div>
<div style="position:absolute;left:9px;top:902.1px;width:18.5px;height:19.5px;background:#383838;"></div>
<svg style="position:absolute;left:10.5px;top:906.9px;" width="16" height="10" viewBox="0 0 16 10"><path d="M0.5 5 Q8 -2.5 15.5 5 Q8 12.5 0.5 5z" fill="#b8b8b8"/><circle cx="8" cy="5" r="3" fill="#262626"/><circle cx="7.3" cy="4.3" r="1" fill="#b8b8b8"/></svg>
<div style="position:absolute;left:52px;top:902.1px;width:18.5px;height:19.5px;background:#383838;"></div>
<div style="position:absolute;left:73.5px;top:902.1px;width:18.5px;height:19.5px;background:#383838;"></div>
<svg style="position:absolute;left:108.5px;top:908.9px;" width="11" height="7" viewBox="0 0 11 7"><path d="M0.8 0.8 L5.5 5.8 L10.2 0.8" fill="none" stroke="#b8b8b8" stroke-width="1.4"/></svg>
<div style="position:absolute;left:125px;top:904.1px;width:17.5px;height:16.5px;background:#b53a3b;"></div>
<div class="t" style="left:154.00px;top:903.90px;font-size:17.10px;font-weight:normal;color:#c4c4c4;">1</div>
<div style="position:absolute;left:196.5px;top:901.6px;width:20.5px;height:20.5px;background:#000;"></div>
<div style="position:absolute;left:198.3px;top:903.4px;width:17px;height:17px;background:#ffffff;"></div>
<div style="position:absolute;left:220px;top:900.8000000000001px;width:240.5px;height:22.3px;background:#a3a3a3;"></div>
<div style="position:absolute;left:222.2px;top:903.0px;width:236.1px;height:17.9px;background:#474747;"></div>
<div class="t" style="left:224.50px;top:903.90px;font-size:17.39px;font-weight:normal;color:#c4c4c4;transform:scaleX(0.9929);-webkit-text-stroke:0.6px currentColor;">Controller</div>
<div style="position:absolute;left:467px;top:902.1px;width:19px;height:19.5px;background:#383838;"></div>
<svg style="position:absolute;left:467.5px;top:903.9px;" width="18" height="16" viewBox="0 0 18 16"><path d="M3.5 8 Q3.5 1 9 1 Q14.5 1 14.5 8z" fill="#b8b8b8"/><rect x="0" y="11.5" width="6" height="1.5" fill="#b8b8b8"/><rect x="12" y="11.5" width="6" height="1.5" fill="#b8b8b8"/><rect x="3" y="7.5" width="12" height="2" fill="#b8b8b8"/><rect x="7" y="8" width="4" height="8" rx="1.5" fill="#b8b8b8"/><circle cx="6.8" cy="4.8" r="1.4" fill="#3a3a3a"/><circle cx="11.2" cy="4.8" r="1.4" fill="#3a3a3a"/></svg>
<div style="position:absolute;left:489px;top:902.1px;width:18.5px;height:19.5px;background:#383838;"></div>
<div style="position:absolute;left:510.5px;top:902.1px;width:18.5px;height:19.5px;background:#383838;"></div>
<svg style="position:absolute;left:512px;top:903.9px;" width="16" height="16" viewBox="0 0 16 16"><path d="M1 15 L15 1" stroke="#bdbdbd" stroke-width="1.7"/></svg>
<div style="position:absolute;left:575px;top:902.1px;width:18.5px;height:19.5px;background:#383838;"></div>
<div style="position:absolute;left:596.5px;top:902.1px;width:18.5px;height:19.5px;background:#383838;"></div>
<div style="position:absolute;left:618px;top:902.1px;width:18.5px;height:19.5px;background:#383838;"></div>
<div style="position:absolute;left:663px;top:902.1px;width:64px;height:19.5px;background:#1c1c1c;"></div>
<div class="t" style="left:671.04px;top:903.60px;font-size:16.38px;font-weight:normal;color:#c8c8c8;transform:scaleX(0.9604);">Norn</div>
<svg style="position:absolute;left:709px;top:909.1px;" width="12" height="7" viewBox="0 0 12 7"><path d="M1 1 L6 5.8 L11 1" fill="none" stroke="#c0c0c0" stroke-width="1.5"/></svg>
<div style="position:absolute;left:734px;top:902.1px;width:18.5px;height:19.5px;background:#383838;"></div>
<div style="position:absolute;left:728px;top:900.6px;width:53px;height:22.6px;background:#4a4a4a;"></div>
<div style="position:absolute;left:734px;top:902.1px;width:18.5px;height:19.5px;background:#383838;"></div>
<svg style="position:absolute;left:759.5px;top:903.9px;" width="19" height="16" viewBox="0 0 19 16"><path d="M6.87 15.17 L5.53 14.82 L4.30 14.23 L3.22 13.41 L2.34 12.43 L1.67 11.30 L1.24 10.08 L1.05 8.83 L1.11 7.58 L1.41 6.38 L1.93 5.28 L2.63 4.32 L3.50 3.53 L4.49 2.93 L5.55 2.54 L6.66 2.36 L7.75 2.41 L8.80 2.66 L9.77 3.10 L10.61 3.71 L11.30 4.45 L11.83 5.30 L12.17 6.22 L12.33 7.17 L12.30 8.12 L12.09 9.02 L11.72 9.84 L11.20 10.56 L10.57 11.15 L9.85 11.60 L9.07 11.89 L8.28 12.03 L7.49 12.00 L6.74 11.82 L6.05 11.51 L5.46 11.09 L4.97 10.56 L4.61 9.97 L4.37 9.34 L4.27 8.69 L4.30 8.06 L4.45 7.46 L4.70 6.92 L5.05 6.45 L5.47 6.08 L5.93 5.80 L6.43 5.63 L6.92 5.57 L7.41 5.60 L7.86 5.73 L8.25 5.93 L8.58 6.20 L8.84 6.52 L9.02 6.86 L9.12 7.22 L9.15 7.57 L9.10 7.91 L8.99 8.20 L8.83 8.45 L8.63 8.65 L8.41 8.79" fill="none" stroke="#b0b0b0" stroke-width="1.3"/><path d="M17 1.5 L17.3 7" stroke="#b0b0b0" stroke-width="1.2"/><rect x="12.5" y="12.3" width="2.5" height="2.5" fill="#b0b0b0"/><rect x="15.2" y="9.6" width="2.5" height="2.5" fill="#b0b0b0"/></svg>
<div style="position:absolute;left:783px;top:902.1px;width:64px;height:19.5px;background:#1c1c1c;"></div>
<div class="t" style="left:791.12px;top:903.60px;font-size:16.38px;font-weight:normal;color:#c8c8c8;transform:scaleX(0.8810);">No M</div>
<svg style="position:absolute;left:829px;top:909.1px;" width="12" height="7" viewBox="0 0 12 7"><path d="M1 1 L6 5.8 L11 1" fill="none" stroke="#c0c0c0" stroke-width="1.5"/></svg>
<svg style="position:absolute;left:902px;top:903.9px;" width="19" height="16" viewBox="0 0 19 16"><path d="M11.88 0.75 L13.18 1.65 L14.27 2.77 L15.10 4.07 L15.64 5.48 L15.89 6.96 L15.85 8.44 L15.51 9.85 L14.91 11.16 L14.08 12.30 L13.05 13.23 L11.87 13.94 L10.60 14.38 L9.28 14.57 L7.98 14.49 L6.74 14.15 L5.60 13.59 L4.62 12.82 L3.83 11.89 L3.25 10.84 L2.89 9.72 L2.77 8.56 L2.88 7.43 L3.20 6.36 L3.72 5.40 L4.41 4.57 L5.24 3.92 L6.16 3.45 L7.13 3.18 L8.12 3.11 L9.08 3.24 L9.98 3.55 L10.78 4.02 L11.45 4.63 L11.97 5.34 L12.33 6.13 L12.53 6.95 L12.55 7.77 L12.41 8.56 L12.12 9.29 L11.70 9.92 L11.18 10.45 L10.58 10.84 L9.93 11.10 L9.27 11.22 L8.61 11.20 L7.99 11.05 L7.44 10.79 L6.97 10.44 L6.59 10.01 L6.32 9.53 L6.15 9.02 L6.10 8.52 L6.15 8.03 L6.30 7.59 L6.52 7.20 L6.81 6.88 L7.14 6.65 L7.49 6.49 L7.85 6.42 L8.19 6.43" fill="none" stroke="#b0b0b0" stroke-width="1.3"/></svg>
<div style="position:absolute;left:929px;top:902.1px;width:128px;height:19.5px;background:#1c1c1c;"></div>
<div class="t" style="left:937.55px;top:903.60px;font-size:16.38px;font-weight:normal;color:#c8c8c8;transform:scaleX(0.9471);">None</div>
<svg style="position:absolute;left:1039px;top:909.1px;" width="12" height="7" viewBox="0 0 12 7"><path d="M1 1 L6 5.8 L11 1" fill="none" stroke="#c0c0c0" stroke-width="1.5"/></svg>
<div style="position:absolute;left:9px;top:975.27px;width:18.5px;height:19.5px;background:#1f1f1f;"></div>
<svg style="position:absolute;left:10.5px;top:980.0699999999999px;" width="16" height="10" viewBox="0 0 16 10"><path d="M0.5 5 Q8 -2.5 15.5 5 Q8 12.5 0.5 5z" fill="#b8b8b8"/><circle cx="8" cy="5" r="3" fill="#262626"/><circle cx="7.3" cy="4.3" r="1" fill="#b8b8b8"/></svg>
<div style="position:absolute;left:52px;top:975.27px;width:18.5px;height:19.5px;background:#1f1f1f;"></div>
<div style="position:absolute;left:73.5px;top:975.27px;width:18.5px;height:19.5px;background:#1f1f1f;"></div>
<svg style="position:absolute;left:108.5px;top:982.0699999999999px;" width="11" height="7" viewBox="0 0 11 7"><path d="M0.8 0.8 L5.5 5.8 L10.2 0.8" fill="none" stroke="#b8b8b8" stroke-width="1.4"/></svg>
<div style="position:absolute;left:125px;top:977.27px;width:17.5px;height:16.5px;background:#6b7de0;"></div>
<div class="t" style="left:155.00px;top:977.07px;font-size:17.10px;font-weight:normal;color:#c4c4c4;">2</div>
<svg style="position:absolute;left:197px;top:976.0699999999999px;" width="18" height="17" viewBox="0 0 18 17"><path d="M9 0.5 L11.3 6 L17 6.3 L12.7 10 L14.2 16 L9 12.8 L3.8 16 L5.3 10 L1 6.3 L6.7 6z" fill="#bdbdbd"/></svg>
<svg style="position:absolute;left:220.5px;top:976.0699999999999px;" width="17" height="17" viewBox="0 0 17 17"><rect x="1" y="1" width="15" height="15" fill="#5e5e5e" stroke="#ababab" stroke-width="1.8"/><circle cx="8.5" cy="8.5" r="5.2" fill="none" stroke="#2a2a2a" stroke-width="2" stroke-dasharray="2.2 1.6"/><circle cx="8.5" cy="8.5" r="3" fill="#1a1a1a"/></svg>
<div class="t" style="left:246.61px;top:977.07px;font-size:17.39px;font-weight:bold;color:#c8c8c8;transform:scaleX(0.8877);">Eye - black</div>
<div style="position:absolute;left:467px;top:975.27px;width:19px;height:19.5px;background:#1f1f1f;"></div>
<svg style="position:absolute;left:467.5px;top:977.0699999999999px;" width="18" height="16" viewBox="0 0 18 16"><path d="M3.5 8 Q3.5 1 9 1 Q14.5 1 14.5 8z" fill="#b8b8b8"/><rect x="0" y="11.5" width="6" height="1.5" fill="#b8b8b8"/><rect x="12" y="11.5" width="6" height="1.5" fill="#b8b8b8"/><rect x="3" y="7.5" width="12" height="2" fill="#b8b8b8"/><rect x="7" y="8" width="4" height="8" rx="1.5" fill="#b8b8b8"/><circle cx="6.8" cy="4.8" r="1.4" fill="#3a3a3a"/><circle cx="11.2" cy="4.8" r="1.4" fill="#3a3a3a"/></svg>
<div style="position:absolute;left:489px;top:975.27px;width:18.5px;height:19.5px;background:#1f1f1f;"></div>
<svg style="position:absolute;left:490.3px;top:977.0699999999999px;" width="16" height="16" viewBox="0 0 16 16"><circle cx="8" cy="8" r="3.3" fill="none" stroke="#8a8a8a" stroke-width="1.3"/><path d="M8 0 V3 M8 13 V16 M0 8 H3 M13 8 H16 M2.3 2.3 L4.5 4.5 M11.5 11.5 L13.7 13.7 M13.7 2.3 L11.5 4.5 M4.5 11.5 L2.3 13.7" stroke="#8a8a8a" stroke-width="1.2"/></svg>
<div style="position:absolute;left:510.5px;top:975.27px;width:18.5px;height:19.5px;background:#1f1f1f;"></div>
<svg style="position:absolute;left:512px;top:977.0699999999999px;" width="16" height="16" viewBox="0 0 16 16"><path d="M1 15 L15 1" stroke="#bdbdbd" stroke-width="1.7"/></svg>
<div style="position:absolute;left:575px;top:975.27px;width:18.5px;height:19.5px;background:#1f1f1f;"></div>
<div style="position:absolute;left:596.5px;top:975.27px;width:18.5px;height:19.5px;background:#1f1f1f;"></div>
<div style="position:absolute;left:618px;top:975.27px;width:18.5px;height:19.5px;background:#1f1f1f;"></div>
<div style="position:absolute;left:663px;top:975.27px;width:64px;height:19.5px;background:#1c1c1c;"></div>
<div class="t" style="left:671.04px;top:976.77px;font-size:16.38px;font-weight:normal;color:#c8c8c8;transform:scaleX(0.9604);">Norn</div>
<svg style="position:absolute;left:709px;top:982.27px;" width="12" height="7" viewBox="0 0 12 7"><path d="M1 1 L6 5.8 L11 1" fill="none" stroke="#c0c0c0" stroke-width="1.5"/></svg>
<div style="position:absolute;left:734px;top:975.27px;width:18.5px;height:19.5px;background:#1f1f1f;"></div>
<svg style="position:absolute;left:759.5px;top:977.0699999999999px;" width="19" height="16" viewBox="0 0 19 16"><path d="M6.87 15.17 L5.53 14.82 L4.30 14.23 L3.22 13.41 L2.34 12.43 L1.67 11.30 L1.24 10.08 L1.05 8.83 L1.11 7.58 L1.41 6.38 L1.93 5.28 L2.63 4.32 L3.50 3.53 L4.49 2.93 L5.55 2.54 L6.66 2.36 L7.75 2.41 L8.80 2.66 L9.77 3.10 L10.61 3.71 L11.30 4.45 L11.83 5.30 L12.17 6.22 L12.33 7.17 L12.30 8.12 L12.09 9.02 L11.72 9.84 L11.20 10.56 L10.57 11.15 L9.85 11.60 L9.07 11.89 L8.28 12.03 L7.49 12.00 L6.74 11.82 L6.05 11.51 L5.46 11.09 L4.97 10.56 L4.61 9.97 L4.37 9.34 L4.27 8.69 L4.30 8.06 L4.45 7.46 L4.70 6.92 L5.05 6.45 L5.47 6.08 L5.93 5.80 L6.43 5.63 L6.92 5.57 L7.41 5.60 L7.86 5.73 L8.25 5.93 L8.58 6.20 L8.84 6.52 L9.02 6.86 L9.12 7.22 L9.15 7.57 L9.10 7.91 L8.99 8.20 L8.83 8.45 L8.63 8.65 L8.41 8.79" fill="none" stroke="#b0b0b0" stroke-width="1.3"/><path d="M17 1.5 L17.3 7" stroke="#b0b0b0" stroke-width="1.2"/><rect x="12.5" y="12.3" width="2.5" height="2.5" fill="#b0b0b0"/><rect x="15.2" y="9.6" width="2.5" height="2.5" fill="#b0b0b0"/></svg>
<div style="position:absolute;left:783px;top:975.27px;width:64px;height:19.5px;background:#1c1c1c;"></div>
<div class="t" style="left:792.00px;top:976.77px;font-size:16.38px;font-weight:normal;color:#c8c8c8;transform:scaleX(0.8924);">3. Ey</div>
<svg style="position:absolute;left:829px;top:982.27px;" width="12" height="7" viewBox="0 0 12 7"><path d="M1 1 L6 5.8 L11 1" fill="none" stroke="#c0c0c0" stroke-width="1.5"/></svg>
<svg style="position:absolute;left:853px;top:976.5699999999999px;" width="17" height="17" viewBox="0 0 17 17"><rect width="17" height="17" fill="#b8b8b8"/><circle cx="8.5" cy="8.5" r="5" fill="#1a1a1a"/></svg>
<div style="position:absolute;left:874px;top:975.27px;width:17.5px;height:19.5px;background:#1f1f1f;"></div>
<svg style="position:absolute;left:902px;top:977.0699999999999px;" width="19" height="16" viewBox="0 0 19 16"><path d="M11.88 0.75 L13.18 1.65 L14.27 2.77 L15.10 4.07 L15.64 5.48 L15.89 6.96 L15.85 8.44 L15.51 9.85 L14.91 11.16 L14.08 12.30 L13.05 13.23 L11.87 13.94 L10.60 14.38 L9.28 14.57 L7.98 14.49 L6.74 14.15 L5.60 13.59 L4.62 12.82 L3.83 11.89 L3.25 10.84 L2.89 9.72 L2.77 8.56 L2.88 7.43 L3.20 6.36 L3.72 5.40 L4.41 4.57 L5.24 3.92 L6.16 3.45 L7.13 3.18 L8.12 3.11 L9.08 3.24 L9.98 3.55 L10.78 4.02 L11.45 4.63 L11.97 5.34 L12.33 6.13 L12.53 6.95 L12.55 7.77 L12.41 8.56 L12.12 9.29 L11.70 9.92 L11.18 10.45 L10.58 10.84 L9.93 11.10 L9.27 11.22 L8.61 11.20 L7.99 11.05 L7.44 10.79 L6.97 10.44 L6.59 10.01 L6.32 9.53 L6.15 9.02 L6.10 8.52 L6.15 8.03 L6.30 7.59 L6.52 7.20 L6.81 6.88 L7.14 6.65 L7.49 6.49 L7.85 6.42 L8.19 6.43" fill="none" stroke="#b0b0b0" stroke-width="1.3"/></svg>
<div style="position:absolute;left:929px;top:975.27px;width:128px;height:19.5px;background:#1c1c1c;"></div>
<div class="t" style="left:937.48px;top:976.77px;font-size:16.38px;font-weight:normal;color:#c8c8c8;transform:scaleX(1.0151);">1. Controller</div>
<svg style="position:absolute;left:1039px;top:982.27px;" width="12" height="7" viewBox="0 0 12 7"><path d="M1 1 L6 5.8 L11 1" fill="none" stroke="#c0c0c0" stroke-width="1.5"/></svg>
<div style="position:absolute;left:9px;top:1024.0500000000002px;width:18.5px;height:19.5px;background:#1f1f1f;"></div>
<svg style="position:absolute;left:10.5px;top:1028.8500000000001px;" width="16" height="10" viewBox="0 0 16 10"><path d="M0.5 5 Q8 -2.5 15.5 5 Q8 12.5 0.5 5z" fill="#b8b8b8"/><circle cx="8" cy="5" r="3" fill="#262626"/><circle cx="7.3" cy="4.3" r="1" fill="#b8b8b8"/></svg>
<div style="position:absolute;left:52px;top:1024.0500000000002px;width:18.5px;height:19.5px;background:#1f1f1f;"></div>
<div style="position:absolute;left:73.5px;top:1024.0500000000002px;width:18.5px;height:19.5px;background:#1f1f1f;"></div>
<svg style="position:absolute;left:108.5px;top:1030.8500000000001px;" width="11" height="7" viewBox="0 0 11 7"><path d="M0.8 0.8 L5.5 5.8 L10.2 0.8" fill="none" stroke="#b8b8b8" stroke-width="1.4"/></svg>
<div style="position:absolute;left:125px;top:1026.0500000000002px;width:17.5px;height:16.5px;background:#6b7de0;"></div>
<div class="t" style="left:155.00px;top:1025.85px;font-size:17.10px;font-weight:normal;color:#c4c4c4;">3</div>
<svg style="position:absolute;left:197px;top:1024.8500000000001px;" width="18" height="17" viewBox="0 0 18 17"><path d="M9 0.5 L11.3 6 L17 6.3 L12.7 10 L14.2 16 L9 12.8 L3.8 16 L5.3 10 L1 6.3 L6.7 6z" fill="#bdbdbd"/></svg>
<svg style="position:absolute;left:220.5px;top:1024.8500000000001px;" width="17" height="17" viewBox="0 0 17 17"><rect x="1" y="1" width="15" height="15" fill="#1c1c1c" stroke="#ababab" stroke-width="1.8"/><circle cx="8.5" cy="8.5" r="4.2" fill="#bdbdbd"/></svg>
<div class="t" style="left:246.61px;top:1025.85px;font-size:17.39px;font-weight:bold;color:#c8c8c8;transform:scaleX(0.8926);">Eye - White</div>
<div style="position:absolute;left:467px;top:1024.0500000000002px;width:19px;height:19.5px;background:#1f1f1f;"></div>
<svg style="position:absolute;left:467.5px;top:1025.8500000000001px;" width="18" height="16" viewBox="0 0 18 16"><path d="M3.5 8 Q3.5 1 9 1 Q14.5 1 14.5 8z" fill="#b8b8b8"/><rect x="0" y="11.5" width="6" height="1.5" fill="#b8b8b8"/><rect x="12" y="11.5" width="6" height="1.5" fill="#b8b8b8"/><rect x="3" y="7.5" width="12" height="2" fill="#b8b8b8"/><rect x="7" y="8" width="4" height="8" rx="1.5" fill="#b8b8b8"/><circle cx="6.8" cy="4.8" r="1.4" fill="#3a3a3a"/><circle cx="11.2" cy="4.8" r="1.4" fill="#3a3a3a"/></svg>
<div style="position:absolute;left:489px;top:1024.0500000000002px;width:18.5px;height:19.5px;background:#1f1f1f;"></div>
<svg style="position:absolute;left:490.3px;top:1025.8500000000001px;" width="16" height="16" viewBox="0 0 16 16"><circle cx="8" cy="8" r="3.3" fill="none" stroke="#8a8a8a" stroke-width="1.3"/><path d="M8 0 V3 M8 13 V16 M0 8 H3 M13 8 H16 M2.3 2.3 L4.5 4.5 M11.5 11.5 L13.7 13.7 M13.7 2.3 L11.5 4.5 M4.5 11.5 L2.3 13.7" stroke="#8a8a8a" stroke-width="1.2"/></svg>
<div style="position:absolute;left:510.5px;top:1024.0500000000002px;width:18.5px;height:19.5px;background:#1f1f1f;"></div>
<svg style="position:absolute;left:512px;top:1025.8500000000001px;" width="16" height="16" viewBox="0 0 16 16"><path d="M1 15 L15 1" stroke="#bdbdbd" stroke-width="1.7"/></svg>
<div style="position:absolute;left:575px;top:1024.0500000000002px;width:18.5px;height:19.5px;background:#1f1f1f;"></div>
<div style="position:absolute;left:596.5px;top:1024.0500000000002px;width:18.5px;height:19.5px;background:#1f1f1f;"></div>
<div style="position:absolute;left:618px;top:1024.0500000000002px;width:18.5px;height:19.5px;background:#1f1f1f;"></div>
<div style="position:absolute;left:663px;top:1024.0500000000002px;width:64px;height:19.5px;background:#1c1c1c;"></div>
<div class="t" style="left:671.04px;top:1025.55px;font-size:16.38px;font-weight:normal;color:#c8c8c8;transform:scaleX(0.9604);">Norn</div>
<svg style="position:absolute;left:709px;top:1031.0500000000002px;" width="12" height="7" viewBox="0 0 12 7"><path d="M1 1 L6 5.8 L11 1" fill="none" stroke="#c0c0c0" stroke-width="1.5"/></svg>
<div style="position:absolute;left:734px;top:1024.0500000000002px;width:18.5px;height:19.5px;background:#1f1f1f;"></div>
<svg style="position:absolute;left:759.5px;top:1025.8500000000001px;" width="19" height="16" viewBox="0 0 19 16"><path d="M6.87 15.17 L5.53 14.82 L4.30 14.23 L3.22 13.41 L2.34 12.43 L1.67 11.30 L1.24 10.08 L1.05 8.83 L1.11 7.58 L1.41 6.38 L1.93 5.28 L2.63 4.32 L3.50 3.53 L4.49 2.93 L5.55 2.54 L6.66 2.36 L7.75 2.41 L8.80 2.66 L9.77 3.10 L10.61 3.71 L11.30 4.45 L11.83 5.30 L12.17 6.22 L12.33 7.17 L12.30 8.12 L12.09 9.02 L11.72 9.84 L11.20 10.56 L10.57 11.15 L9.85 11.60 L9.07 11.89 L8.28 12.03 L7.49 12.00 L6.74 11.82 L6.05 11.51 L5.46 11.09 L4.97 10.56 L4.61 9.97 L4.37 9.34 L4.27 8.69 L4.30 8.06 L4.45 7.46 L4.70 6.92 L5.05 6.45 L5.47 6.08 L5.93 5.80 L6.43 5.63 L6.92 5.57 L7.41 5.60 L7.86 5.73 L8.25 5.93 L8.58 6.20 L8.84 6.52 L9.02 6.86 L9.12 7.22 L9.15 7.57 L9.10 7.91 L8.99 8.20 L8.83 8.45 L8.63 8.65 L8.41 8.79" fill="none" stroke="#b0b0b0" stroke-width="1.3"/><path d="M17 1.5 L17.3 7" stroke="#b0b0b0" stroke-width="1.2"/><rect x="12.5" y="12.3" width="2.5" height="2.5" fill="#b0b0b0"/><rect x="15.2" y="9.6" width="2.5" height="2.5" fill="#b0b0b0"/></svg>
<div style="position:absolute;left:783px;top:1024.0500000000002px;width:64px;height:19.5px;background:#1c1c1c;"></div>
<div class="t" style="left:791.12px;top:1025.55px;font-size:16.38px;font-weight:normal;color:#c8c8c8;transform:scaleX(0.8810);">No M</div>
<svg style="position:absolute;left:829px;top:1031.0500000000002px;" width="12" height="7" viewBox="0 0 12 7"><path d="M1 1 L6 5.8 L11 1" fill="none" stroke="#c0c0c0" stroke-width="1.5"/></svg>
<svg style="position:absolute;left:902px;top:1025.8500000000001px;" width="19" height="16" viewBox="0 0 19 16"><path d="M11.88 0.75 L13.18 1.65 L14.27 2.77 L15.10 4.07 L15.64 5.48 L15.89 6.96 L15.85 8.44 L15.51 9.85 L14.91 11.16 L14.08 12.30 L13.05 13.23 L11.87 13.94 L10.60 14.38 L9.28 14.57 L7.98 14.49 L6.74 14.15 L5.60 13.59 L4.62 12.82 L3.83 11.89 L3.25 10.84 L2.89 9.72 L2.77 8.56 L2.88 7.43 L3.20 6.36 L3.72 5.40 L4.41 4.57 L5.24 3.92 L6.16 3.45 L7.13 3.18 L8.12 3.11 L9.08 3.24 L9.98 3.55 L10.78 4.02 L11.45 4.63 L11.97 5.34 L12.33 6.13 L12.53 6.95 L12.55 7.77 L12.41 8.56 L12.12 9.29 L11.70 9.92 L11.18 10.45 L10.58 10.84 L9.93 11.10 L9.27 11.22 L8.61 11.20 L7.99 11.05 L7.44 10.79 L6.97 10.44 L6.59 10.01 L6.32 9.53 L6.15 9.02 L6.10 8.52 L6.15 8.03 L6.30 7.59 L6.52 7.20 L6.81 6.88 L7.14 6.65 L7.49 6.49 L7.85 6.42 L8.19 6.43" fill="none" stroke="#b0b0b0" stroke-width="1.3"/></svg>
<div style="position:absolute;left:929px;top:1024.0500000000002px;width:128px;height:19.5px;background:#1c1c1c;"></div>
<div class="t" style="left:937.48px;top:1025.55px;font-size:16.38px;font-weight:normal;color:#c8c8c8;transform:scaleX(1.0151);">1. Controller</div>
<svg style="position:absolute;left:1039px;top:1031.0500000000002px;" width="12" height="7" viewBox="0 0 12 7"><path d="M1 1 L6 5.8 L11 1" fill="none" stroke="#c0c0c0" stroke-width="1.5"/></svg>
<div style="position:absolute;left:9px;top:1072.83px;width:18.5px;height:19.5px;background:#1f1f1f;"></div>
<svg style="position:absolute;left:10.5px;top:1077.6299999999999px;" width="16" height="10" viewBox="0 0 16 10"><path d="M0.5 5 Q8 -2.5 15.5 5 Q8 12.5 0.5 5z" fill="#b8b8b8"/><circle cx="8" cy="5" r="3" fill="#262626"/><circle cx="7.3" cy="4.3" r="1" fill="#b8b8b8"/></svg>
<div style="position:absolute;left:52px;top:1072.83px;width:18.5px;height:19.5px;background:#1f1f1f;"></div>
<div style="position:absolute;left:73.5px;top:1072.83px;width:18.5px;height:19.5px;background:#1f1f1f;"></div>
<svg style="position:absolute;left:108.5px;top:1077.1299999999999px;" width="7" height="11" viewBox="0 0 7 11"><path d="M0.8 0.8 L5.8 5.5 L0.8 10.2" fill="none" stroke="#b8b8b8" stroke-width="1.4"/></svg>
<div style="position:absolute;left:125px;top:1074.83px;width:17.5px;height:16.5px;background:#b53a3b;"></div>
<div class="t" style="left:155.00px;top:1074.63px;font-size:17.10px;font-weight:normal;color:#c4c4c4;">4</div>
<div style="position:absolute;left:196.5px;top:1072.33px;width:20.5px;height:20.5px;background:#000;"></div>
<div style="position:absolute;left:198.3px;top:1074.1299999999999px;width:17px;height:17px;background:#e35fd6;"></div>
<div class="t" style="left:223.66px;top:1074.63px;font-size:17.39px;font-weight:bold;color:#c8c8c8;transform:scaleX(0.8351);">BG</div>
<div style="position:absolute;left:467px;top:1072.83px;width:19px;height:19.5px;background:#1f1f1f;"></div>
<svg style="position:absolute;left:467.5px;top:1074.6299999999999px;" width="18" height="16" viewBox="0 0 18 16"><path d="M3.5 8 Q3.5 1 9 1 Q14.5 1 14.5 8z" fill="#b8b8b8"/><rect x="0" y="11.5" width="6" height="1.5" fill="#b8b8b8"/><rect x="12" y="11.5" width="6" height="1.5" fill="#b8b8b8"/><rect x="3" y="7.5" width="12" height="2" fill="#b8b8b8"/><rect x="7" y="8" width="4" height="8" rx="1.5" fill="#b8b8b8"/><circle cx="6.8" cy="4.8" r="1.4" fill="#3a3a3a"/><circle cx="11.2" cy="4.8" r="1.4" fill="#3a3a3a"/></svg>
<div style="position:absolute;left:489px;top:1072.83px;width:18.5px;height:19.5px;background:#1f1f1f;"></div>
<div style="position:absolute;left:510.5px;top:1072.83px;width:18.5px;height:19.5px;background:#1f1f1f;"></div>
<svg style="position:absolute;left:512px;top:1074.6299999999999px;" width="16" height="16" viewBox="0 0 16 16"><path d="M1 15 L15 1" stroke="#bdbdbd" stroke-width="1.7"/></svg>
<div style="position:absolute;left:575px;top:1072.83px;width:18.5px;height:19.5px;background:#1f1f1f;"></div>
<div style="position:absolute;left:596.5px;top:1072.83px;width:18.5px;height:19.5px;background:#1f1f1f;"></div>
<div style="position:absolute;left:618px;top:1072.83px;width:18.5px;height:19.5px;background:#1f1f1f;"></div>
<div style="position:absolute;left:663px;top:1072.83px;width:64px;height:19.5px;background:#1c1c1c;"></div>
<div class="t" style="left:671.04px;top:1074.33px;font-size:16.38px;font-weight:normal;color:#c8c8c8;transform:scaleX(0.9604);">Norn</div>
<svg style="position:absolute;left:709px;top:1079.83px;" width="12" height="7" viewBox="0 0 12 7"><path d="M1 1 L6 5.8 L11 1" fill="none" stroke="#c0c0c0" stroke-width="1.5"/></svg>
<div style="position:absolute;left:734px;top:1072.83px;width:18.5px;height:19.5px;background:#1f1f1f;"></div>
<svg style="position:absolute;left:759.5px;top:1074.6299999999999px;" width="19" height="16" viewBox="0 0 19 16"><path d="M6.87 15.17 L5.53 14.82 L4.30 14.23 L3.22 13.41 L2.34 12.43 L1.67 11.30 L1.24 10.08 L1.05 8.83 L1.11 7.58 L1.41 6.38 L1.93 5.28 L2.63 4.32 L3.50 3.53 L4.49 2.93 L5.55 2.54 L6.66 2.36 L7.75 2.41 L8.80 2.66 L9.77 3.10 L10.61 3.71 L11.30 4.45 L11.83 5.30 L12.17 6.22 L12.33 7.17 L12.30 8.12 L12.09 9.02 L11.72 9.84 L11.20 10.56 L10.57 11.15 L9.85 11.60 L9.07 11.89 L8.28 12.03 L7.49 12.00 L6.74 11.82 L6.05 11.51 L5.46 11.09 L4.97 10.56 L4.61 9.97 L4.37 9.34 L4.27 8.69 L4.30 8.06 L4.45 7.46 L4.70 6.92 L5.05 6.45 L5.47 6.08 L5.93 5.80 L6.43 5.63 L6.92 5.57 L7.41 5.60 L7.86 5.73 L8.25 5.93 L8.58 6.20 L8.84 6.52 L9.02 6.86 L9.12 7.22 L9.15 7.57 L9.10 7.91 L8.99 8.20 L8.83 8.45 L8.63 8.65 L8.41 8.79" fill="none" stroke="#b0b0b0" stroke-width="1.3"/><path d="M17 1.5 L17.3 7" stroke="#b0b0b0" stroke-width="1.2"/><rect x="12.5" y="12.3" width="2.5" height="2.5" fill="#b0b0b0"/><rect x="15.2" y="9.6" width="2.5" height="2.5" fill="#b0b0b0"/></svg>
<div style="position:absolute;left:783px;top:1072.83px;width:64px;height:19.5px;background:#1c1c1c;"></div>
<div class="t" style="left:791.12px;top:1074.33px;font-size:16.38px;font-weight:normal;color:#c8c8c8;transform:scaleX(0.8810);">No M</div>
<svg style="position:absolute;left:829px;top:1079.83px;" width="12" height="7" viewBox="0 0 12 7"><path d="M1 1 L6 5.8 L11 1" fill="none" stroke="#c0c0c0" stroke-width="1.5"/></svg>
<svg style="position:absolute;left:902px;top:1074.6299999999999px;" width="19" height="16" viewBox="0 0 19 16"><path d="M11.88 0.75 L13.18 1.65 L14.27 2.77 L15.10 4.07 L15.64 5.48 L15.89 6.96 L15.85 8.44 L15.51 9.85 L14.91 11.16 L14.08 12.30 L13.05 13.23 L11.87 13.94 L10.60 14.38 L9.28 14.57 L7.98 14.49 L6.74 14.15 L5.60 13.59 L4.62 12.82 L3.83 11.89 L3.25 10.84 L2.89 9.72 L2.77 8.56 L2.88 7.43 L3.20 6.36 L3.72 5.40 L4.41 4.57 L5.24 3.92 L6.16 3.45 L7.13 3.18 L8.12 3.11 L9.08 3.24 L9.98 3.55 L10.78 4.02 L11.45 4.63 L11.97 5.34 L12.33 6.13 L12.53 6.95 L12.55 7.77 L12.41 8.56 L12.12 9.29 L11.70 9.92 L11.18 10.45 L10.58 10.84 L9.93 11.10 L9.27 11.22 L8.61 11.20 L7.99 11.05 L7.44 10.79 L6.97 10.44 L6.59 10.01 L6.32 9.53 L6.15 9.02 L6.10 8.52 L6.15 8.03 L6.30 7.59 L6.52 7.20 L6.81 6.88 L7.14 6.65 L7.49 6.49 L7.85 6.42 L8.19 6.43" fill="none" stroke="#b0b0b0" stroke-width="1.3"/></svg>
<div style="position:absolute;left:929px;top:1072.83px;width:128px;height:19.5px;background:#1c1c1c;"></div>
<div class="t" style="left:937.55px;top:1074.33px;font-size:16.38px;font-weight:normal;color:#c8c8c8;transform:scaleX(0.9471);">None</div>
<svg style="position:absolute;left:1039px;top:1079.83px;" width="12" height="7" viewBox="0 0 12 7"><path d="M1 1 L6 5.8 L11 1" fill="none" stroke="#c0c0c0" stroke-width="1.5"/></svg>
<div style="position:absolute;left:30px;top:925.99px;width:19px;height:20.5px;background:#222;box-shadow:inset 0 0 0 1px #2c2c2c;"></div>
<svg style="position:absolute;left:13px;top:930.79px;" width="53" height="11" viewBox="0 0 53 11"><path d="M0 5.5 L7 0 V11z" fill="#5c5c5c"/><path d="M20 5.5 L26 -0.5 L32 5.5 L26 11.5z" fill="#2d8cf0"/><path d="M45 0 L52 5.5 L45 11z" fill="#5c5c5c"/></svg>
<div style="position:absolute;left:174px;top:925.99px;width:19px;height:20.5px;background:#222;box-shadow:inset 0 0 0 1px #2c2c2c;"></div>
<svg style="position:absolute;left:175px;top:926.29px;" width="17" height="18" viewBox="0 0 17 18"><circle cx="8.5" cy="10.5" r="6.7" fill="none" stroke="#2e8de6" stroke-width="1.8"/><path d="M5.5 1 H11.5 M8.5 1 V3.8" stroke="#2e8de6" stroke-width="1.6"/><path d="M2.8 4.5 L4.2 3" stroke="#2e8de6" stroke-width="1.5"/><path d="M8.5 10.5 L12 7" stroke="#2e8de6" stroke-width="1.6"/></svg>
<svg style="position:absolute;left:202px;top:928.29px;" width="17" height="17" viewBox="0 0 17 17"><path d="M0.7 0 V15.7 H16" fill="none" stroke="#b8b8b8" stroke-width="1.3"/><path d="M1.5 7.5 L4 4 L8.5 11.5 L13.7 4.2" fill="none" stroke="#b8b8b8" stroke-width="1.1"/></svg>
<div class="t" style="left:229.07px;top:929.29px;font-size:17.39px;font-weight:normal;color:#c4c4c4;transform:scaleX(0.9310);">Position</div>
<div class="t" style="left:469.50px;top:930.09px;font-size:15.94px;font-weight:normal;color:#2e9bf0;transform:scaleX(0.9487);">960,0,537,5</div>
<svg style="position:absolute;left:920.5px;top:928.29px;" width="19" height="16" viewBox="0 0 19 16"><path d="M11.88 0.75 L13.18 1.65 L14.27 2.77 L15.10 4.07 L15.64 5.48 L15.89 6.96 L15.85 8.44 L15.51 9.85 L14.91 11.16 L14.08 12.30 L13.05 13.23 L11.87 13.94 L10.60 14.38 L9.28 14.57 L7.98 14.49 L6.74 14.15 L5.60 13.59 L4.62 12.82 L3.83 11.89 L3.25 10.84 L2.89 9.72 L2.77 8.56 L2.88 7.43 L3.20 6.36 L3.72 5.40 L4.41 4.57 L5.24 3.92 L6.16 3.45 L7.13 3.18 L8.12 3.11 L9.08 3.24 L9.98 3.55 L10.78 4.02 L11.45 4.63 L11.97 5.34 L12.33 6.13 L12.53 6.95 L12.55 7.77 L12.41 8.56 L12.12 9.29 L11.70 9.92 L11.18 10.45 L10.58 10.84 L9.93 11.10 L9.27 11.22 L8.61 11.20 L7.99 11.05 L7.44 10.79 L6.97 10.44 L6.59 10.01 L6.32 9.53 L6.15 9.02 L6.10 8.52 L6.15 8.03 L6.30 7.59 L6.52 7.20 L6.81 6.88 L7.14 6.65 L7.49 6.49 L7.85 6.42 L8.19 6.43" fill="none" stroke="#b0b0b0" stroke-width="1.3"/></svg>
<div style="position:absolute;left:30px;top:950.38px;width:19px;height:20.5px;background:#222;box-shadow:inset 0 0 0 1px #2c2c2c;"></div>
<svg style="position:absolute;left:13px;top:955.18px;" width="53" height="11" viewBox="0 0 53 11"><path d="M0 5.5 L7 0 V11z" fill="#5c5c5c"/><path d="M20 5.5 L26 -0.5 L32 5.5 L26 11.5z" fill="#2d8cf0"/><path d="M45 0 L52 5.5 L45 11z" fill="#5c5c5c"/></svg>
<div style="position:absolute;left:174px;top:950.38px;width:19px;height:20.5px;background:#222;box-shadow:inset 0 0 0 1px #2c2c2c;"></div>
<svg style="position:absolute;left:175px;top:950.68px;" width="17" height="18" viewBox="0 0 17 18"><circle cx="8.5" cy="10.5" r="6.7" fill="none" stroke="#2e8de6" stroke-width="1.8"/><path d="M5.5 1 H11.5 M8.5 1 V3.8" stroke="#2e8de6" stroke-width="1.6"/><path d="M2.8 4.5 L4.2 3" stroke="#2e8de6" stroke-width="1.5"/><path d="M8.5 10.5 L12 7" stroke="#2e8de6" stroke-width="1.6"/></svg>
<svg style="position:absolute;left:202px;top:952.68px;" width="17" height="17" viewBox="0 0 17 17"><path d="M0.7 0 V15.7 H16" fill="none" stroke="#b8b8b8" stroke-width="1.3"/><path d="M1.5 7.5 L4 4 L8.5 11.5 L13.7 4.2" fill="none" stroke="#b8b8b8" stroke-width="1.1"/></svg>
<div style="position:absolute;left:225px;top:950.38px;width:237px;height:21px;background:#4b4b4b;"></div>
<div class="t" style="left:229.06px;top:953.68px;font-size:17.39px;font-weight:normal;color:#c4c4c4;transform:scaleX(0.9357);">Rotation</div>
<svg style="position:absolute;left:920.5px;top:952.68px;" width="19" height="16" viewBox="0 0 19 16"><path d="M11.88 0.75 L13.18 1.65 L14.27 2.77 L15.10 4.07 L15.64 5.48 L15.89 6.96 L15.85 8.44 L15.51 9.85 L14.91 11.16 L14.08 12.30 L13.05 13.23 L11.87 13.94 L10.60 14.38 L9.28 14.57 L7.98 14.49 L6.74 14.15 L5.60 13.59 L4.62 12.82 L3.83 11.89 L3.25 10.84 L2.89 9.72 L2.77 8.56 L2.88 7.43 L3.20 6.36 L3.72 5.40 L4.41 4.57 L5.24 3.92 L6.16 3.45 L7.13 3.18 L8.12 3.11 L9.08 3.24 L9.98 3.55 L10.78 4.02 L11.45 4.63 L11.97 5.34 L12.33 6.13 L12.53 6.95 L12.55 7.77 L12.41 8.56 L12.12 9.29 L11.70 9.92 L11.18 10.45 L10.58 10.84 L9.93 11.10 L9.27 11.22 L8.61 11.20 L7.99 11.05 L7.44 10.79 L6.97 10.44 L6.59 10.01 L6.32 9.53 L6.15 9.02 L6.10 8.52 L6.15 8.03 L6.30 7.59 L6.52 7.20 L6.81 6.88 L7.14 6.65 L7.49 6.49 L7.85 6.42 L8.19 6.43" fill="none" stroke="#b0b0b0" stroke-width="1.3"/></svg>
<div style="position:absolute;left:30px;top:999.1600000000001px;width:19px;height:20.5px;background:#222;box-shadow:inset 0 0 0 1px #2c2c2c;"></div>
<svg style="position:absolute;left:13px;top:1003.96px;" width="53" height="11" viewBox="0 0 53 11"><path d="M0 5.5 L7 0 V11z" fill="#5c5c5c"/><path d="M20 5.5 L26 -0.5 L32 5.5 L26 11.5z" fill="#2d8cf0"/><path d="M45 0 L52 5.5 L45 11z" fill="#c8c8c8"/></svg>
<div style="position:absolute;left:174px;top:999.1600000000001px;width:19px;height:20.5px;background:#222;box-shadow:inset 0 0 0 1px #2c2c2c;"></div>
<svg style="position:absolute;left:175px;top:999.46px;" width="17" height="18" viewBox="0 0 17 18"><circle cx="8.5" cy="10.5" r="6.7" fill="none" stroke="#2e8de6" stroke-width="1.8"/><path d="M5.5 1 H11.5 M8.5 1 V3.8" stroke="#2e8de6" stroke-width="1.6"/><path d="M2.8 4.5 L4.2 3" stroke="#2e8de6" stroke-width="1.5"/><path d="M8.5 10.5 L12 7" stroke="#2e8de6" stroke-width="1.6"/></svg>
<svg style="position:absolute;left:202px;top:1001.46px;" width="17" height="17" viewBox="0 0 17 17"><path d="M0.7 0 V15.7 H16" fill="none" stroke="#b8b8b8" stroke-width="1.3"/><path d="M1.5 7.5 L4 4 L8.5 11.5 L13.7 4.2" fill="none" stroke="#b8b8b8" stroke-width="1.1"/></svg>
<div class="t" style="left:229.07px;top:1002.46px;font-size:17.39px;font-weight:normal;color:#c4c4c4;transform:scaleX(0.9310);">Position</div>
<div class="t" style="left:469.50px;top:1003.26px;font-size:15.94px;font-weight:normal;color:#2e9bf0;transform:scaleX(0.9459);">49,7,48,7</div>
<svg style="position:absolute;left:920.5px;top:1001.46px;" width="19" height="16" viewBox="0 0 19 16"><path d="M11.88 0.75 L13.18 1.65 L14.27 2.77 L15.10 4.07 L15.64 5.48 L15.89 6.96 L15.85 8.44 L15.51 9.85 L14.91 11.16 L14.08 12.30 L13.05 13.23 L11.87 13.94 L10.60 14.38 L9.28 14.57 L7.98 14.49 L6.74 14.15 L5.60 13.59 L4.62 12.82 L3.83 11.89 L3.25 10.84 L2.89 9.72 L2.77 8.56 L2.88 7.43 L3.20 6.36 L3.72 5.40 L4.41 4.57 L5.24 3.92 L6.16 3.45 L7.13 3.18 L8.12 3.11 L9.08 3.24 L9.98 3.55 L10.78 4.02 L11.45 4.63 L11.97 5.34 L12.33 6.13 L12.53 6.95 L12.55 7.77 L12.41 8.56 L12.12 9.29 L11.70 9.92 L11.18 10.45 L10.58 10.84 L9.93 11.10 L9.27 11.22 L8.61 11.20 L7.99 11.05 L7.44 10.79 L6.97 10.44 L6.59 10.01 L6.32 9.53 L6.15 9.02 L6.10 8.52 L6.15 8.03 L6.30 7.59 L6.52 7.20 L6.81 6.88 L7.14 6.65 L7.49 6.49 L7.85 6.42 L8.19 6.43" fill="none" stroke="#b0b0b0" stroke-width="1.3"/></svg>
<svg style="position:absolute;left:13px;top:1052.74px;" width="53" height="11" viewBox="0 0 53 11"><path d="M0 5.5 L7 0 V11z" fill="#c8c8c8"/><path d="M20 5.5 L26 -0.5 L32 5.5 L26 11.5z" fill="#444" stroke="#c8c8c8" stroke-width="1.3"/><path d="M45 0 L52 5.5 L45 11z" fill="#c8c8c8"/></svg>
<div style="position:absolute;left:174px;top:1047.94px;width:19px;height:20.5px;background:#222;box-shadow:inset 0 0 0 1px #2c2c2c;"></div>
<svg style="position:absolute;left:175px;top:1048.24px;" width="17" height="18" viewBox="0 0 17 18"><circle cx="8.5" cy="10.5" r="6.7" fill="none" stroke="#2e8de6" stroke-width="1.8"/><path d="M5.5 1 H11.5 M8.5 1 V3.8" stroke="#2e8de6" stroke-width="1.6"/><path d="M2.8 4.5 L4.2 3" stroke="#2e8de6" stroke-width="1.5"/><path d="M8.5 10.5 L12 7" stroke="#2e8de6" stroke-width="1.6"/></svg>
<svg style="position:absolute;left:202px;top:1050.24px;" width="17" height="17" viewBox="0 0 17 17"><path d="M0.7 0 V15.7 H16" fill="none" stroke="#b8b8b8" stroke-width="1.3"/><path d="M1.5 7.5 L4 4 L8.5 11.5 L13.7 4.2" fill="none" stroke="#b8b8b8" stroke-width="1.1"/></svg>
<div class="t" style="left:230.00px;top:1051.24px;font-size:17.39px;font-weight:normal;color:#c4c4c4;transform:scaleX(0.8411);">Scale</div>
<svg style="position:absolute;left:920.5px;top:1050.24px;" width="19" height="16" viewBox="0 0 19 16"><path d="M11.88 0.75 L13.18 1.65 L14.27 2.77 L15.10 4.07 L15.64 5.48 L15.89 6.96 L15.85 8.44 L15.51 9.85 L14.91 11.16 L14.08 12.30 L13.05 13.23 L11.87 13.94 L10.60 14.38 L9.28 14.57 L7.98 14.49 L6.74 14.15 L5.60 13.59 L4.62 12.82 L3.83 11.89 L3.25 10.84 L2.89 9.72 L2.77 8.56 L2.88 7.43 L3.20 6.36 L3.72 5.40 L4.41 4.57 L5.24 3.92 L6.16 3.45 L7.13 3.18 L8.12 3.11 L9.08 3.24 L9.98 3.55 L10.78 4.02 L11.45 4.63 L11.97 5.34 L12.33 6.13 L12.53 6.95 L12.55 7.77 L12.41 8.56 L12.12 9.29 L11.70 9.92 L11.18 10.45 L10.58 10.84 L9.93 11.10 L9.27 11.22 L8.61 11.20 L7.99 11.05 L7.44 10.79 L6.97 10.44 L6.59 10.01 L6.32 9.53 L6.15 9.02 L6.10 8.52 L6.15 8.03 L6.30 7.59 L6.52 7.20 L6.81 6.88 L7.14 6.65 L7.49 6.49 L7.85 6.42 L8.19 6.43" fill="none" stroke="#b0b0b0" stroke-width="1.3"/></svg>
<div class="t" style="left:469.50px;top:954.48px;font-size:15.94px;font-weight:normal;color:#2e9bf0;transform:scaleX(0.8889);">0</div>
<div class="t" style="left:478.50px;top:954.48px;font-size:15.50px;font-weight:normal;color:#b8b8b8;">x</div>
<div class="t" style="left:487.00px;top:954.48px;font-size:15.94px;font-weight:normal;color:#2e9bf0;transform:scaleX(0.9494);">+0,0</div>
<div class="t" style="left:519.00px;top:954.48px;font-size:15.50px;font-weight:normal;color:#b8b8b8;transform:scaleX(0.8333);">°</div>
<div style="position:absolute;left:466px;top:1047.94px;width:19.5px;height:20.5px;background:#1c1c1c;"></div>
<div class="t" style="left:493.02px;top:1052.04px;font-size:15.94px;font-weight:normal;color:#2e9bf0;transform:scaleX(0.9756);">13,6,10,8</div>
<div class="t" style="left:559.50px;top:1052.04px;font-size:15.94px;font-weight:normal;color:#b8b8b8;transform:scaleX(0.8571);">%</div>
<div style="position:absolute;left:1085px;top:899px;width:2px;height:301px;background:#0c0c0c;"></div>
<div style="position:absolute;left:1086px;top:842px;width:11px;height:29px;background:#232323;"></div>
<div style="position:absolute;left:1087px;top:828.5px;width:883px;height:14.5px;background:#101010;border-radius:7px 7px 7px 7px;"></div>
<div style="position:absolute;left:1096px;top:830px;width:864px;height:11.5px;background:#6a6a6a;"></div>
<div style="position:absolute;left:1087.5px;top:830px;width:8.5px;height:11.5px;background:#2d8cf0;border-radius:6px 0 0 6px;"></div>
<div style="position:absolute;left:1960px;top:830px;width:9.5px;height:11.5px;background:#2d8cf0;border-radius:0 6px 6px 0;"></div>
<div style="position:absolute;left:1240.5px;top:830px;width:1.5px;height:11.5px;background:#2d8cf0;"></div>
<div style="position:absolute;left:1087px;top:842px;width:883px;height:30px;overflow:hidden;">
<div class="t" style="left:-6.50px;top:3.50px;font-size:15.22px;font-weight:normal;color:#ababab;transform:scaleX(0.9540);">0:00f</div>
<div style="position:absolute;left:9.5px;top:20px;width:1.1px;height:8px;background:#8e8e8e;"></div>
<div class="t" style="left:71.00px;top:3.50px;font-size:15.22px;font-weight:normal;color:#ababab;">02f</div>
<div style="position:absolute;left:81.5px;top:21px;width:1.1px;height:7px;background:#8e8e8e;"></div>
<div class="t" style="left:143.00px;top:3.50px;font-size:15.22px;font-weight:normal;color:#ababab;">04f</div>
<div style="position:absolute;left:153.5px;top:21px;width:1.1px;height:7px;background:#8e8e8e;"></div>
<div class="t" style="left:215.00px;top:3.50px;font-size:15.22px;font-weight:normal;color:#ababab;">06f</div>
<div style="position:absolute;left:225.5px;top:21px;width:1.1px;height:7px;background:#8e8e8e;"></div>
<div class="t" style="left:287.00px;top:3.50px;font-size:15.22px;font-weight:normal;color:#ababab;">08f</div>
<div style="position:absolute;left:297.5px;top:21px;width:1.1px;height:7px;background:#8e8e8e;"></div>
<div class="t" style="left:357.95px;top:3.50px;font-size:15.22px;font-weight:normal;color:#ababab;transform:scaleX(1.0521);">10f</div>
<div style="position:absolute;left:369.5px;top:21px;width:1.1px;height:7px;background:#8e8e8e;"></div>
<div class="t" style="left:429.95px;top:3.50px;font-size:15.22px;font-weight:normal;color:#ababab;transform:scaleX(1.0521);">12f</div>
<div style="position:absolute;left:441.5px;top:21px;width:1.1px;height:7px;background:#8e8e8e;"></div>
<div class="t" style="left:501.95px;top:3.50px;font-size:15.22px;font-weight:normal;color:#ababab;transform:scaleX(1.0521);">14f</div>
<div style="position:absolute;left:513.5px;top:21px;width:1.1px;height:7px;background:#8e8e8e;"></div>
<div class="t" style="left:573.95px;top:3.50px;font-size:15.22px;font-weight:normal;color:#ababab;transform:scaleX(1.0521);">16f</div>
<div style="position:absolute;left:585.5px;top:21px;width:1.1px;height:7px;background:#8e8e8e;"></div>
<div class="t" style="left:645.95px;top:3.50px;font-size:15.22px;font-weight:normal;color:#ababab;transform:scaleX(1.0521);">18f</div>
<div style="position:absolute;left:657.5px;top:21px;width:1.1px;height:7px;background:#8e8e8e;"></div>
<div class="t" style="left:719.00px;top:3.50px;font-size:15.22px;font-weight:normal;color:#ababab;">20f</div>
<div style="position:absolute;left:729.5px;top:21px;width:1.1px;height:7px;background:#8e8e8e;"></div>
<div class="t" style="left:791.00px;top:3.50px;font-size:15.22px;font-weight:normal;color:#ababab;">22f</div>
<div style="position:absolute;left:801.5px;top:21px;width:1.1px;height:7px;background:#8e8e8e;"></div>
<div class="t" style="left:853.50px;top:3.50px;font-size:15.22px;font-weight:normal;color:#ababab;transform:scaleX(1.0454);">01:00f</div>
<div style="position:absolute;left:873.5px;top:20px;width:1.1px;height:8px;background:#8e8e8e;"></div>
</div>
<div style="position:absolute;left:1087px;top:871px;width:883px;height:24px;background:#101010;"></div>
<div style="position:absolute;left:1096px;top:872px;width:864px;height:21px;background:#646464;"></div>
<div style="position:absolute;left:1088px;top:872px;width:8px;height:21px;background:#2d8cf0;border-radius:6px 0 0 6px;"></div>
<div style="position:absolute;left:1960px;top:872px;width:8.5px;height:21px;background:#2d8cf0;border-radius:0 6px 6px 0;"></div>
<div style="position:absolute;left:1097px;top:895.5px;width:863px;height:3.7px;background:#12c022;"></div>
<div style="position:absolute;left:1970px;top:783px;width:25.5px;height:140px;background:#282828;"></div>
<div style="position:absolute;left:1970px;top:923px;width:25.5px;height:277px;background:#242424;"></div>
<svg style="position:absolute;left:1976px;top:875px;" width="17" height="20" viewBox="0 0 17 20"><path d="M0.5 0.5 H16.5 V13 L8.5 19.5 L0.5 13z" fill="#b8b8b8"/></svg>
<svg style="position:absolute;left:1971px;top:903px;" width="22" height="20" viewBox="0 0 22 20"><path d="M1 15 L10 3 L11 9" fill="none" stroke="#b8b8b8" stroke-width="1.4"/><rect x="10" y="5" width="11" height="10" fill="#b8b8b8"/><circle cx="9.5" cy="15" r="4.3" fill="#282828" stroke="#b8b8b8" stroke-width="1.6"/></svg>
<div style="position:absolute;left:1087px;top:899.3px;width:883px;height:1.3px;background:#1b1b1b;"></div>
<div style="position:absolute;left:1087px;top:900.6px;width:10px;height:22.6px;background:#474747;"></div>
<div style="position:absolute;left:1960px;top:900.6px;width:10px;height:22.6px;background:#464646;"></div>
<div style="position:absolute;left:1087px;top:923.2px;width:883px;height:1.7899999999999991px;background:#1f1f1f;"></div>
<div style="position:absolute;left:1087px;top:924.99px;width:10px;height:22.6px;background:#2d2d2d;"></div>
<div style="position:absolute;left:1960px;top:924.99px;width:10px;height:22.6px;background:#2d2d2d;"></div>
<div style="position:absolute;left:1097px;top:924.99px;width:863px;height:22.6px;background:#333333;"></div>
<div style="position:absolute;left:1087px;top:947.59px;width:883px;height:1.7899999999999991px;background:#1f1f1f;"></div>
<div style="position:absolute;left:1087px;top:949.38px;width:10px;height:22.6px;background:#2d2d2d;"></div>
<div style="position:absolute;left:1960px;top:949.38px;width:10px;height:22.6px;background:#2d2d2d;"></div>
<div style="position:absolute;left:1097px;top:949.38px;width:863px;height:22.6px;background:#333333;"></div>
<div style="position:absolute;left:1087px;top:971.98px;width:883px;height:1.7899999999999991px;background:#1f1f1f;"></div>
<div style="position:absolute;left:1087px;top:973.77px;width:10px;height:22.6px;background:#2d2d2d;"></div>
<div style="position:absolute;left:1960px;top:973.77px;width:10px;height:22.6px;background:#2d2d2d;"></div>
<div style="position:absolute;left:1087px;top:996.37px;width:883px;height:1.7899999999999991px;background:#1f1f1f;"></div>
<div style="position:absolute;left:1087px;top:998.1600000000001px;width:10px;height:22.6px;background:#2d2d2d;"></div>
<div style="position:absolute;left:1960px;top:998.1600000000001px;width:10px;height:22.6px;background:#2d2d2d;"></div>
<div style="position:absolute;left:1097px;top:998.1600000000001px;width:863px;height:22.6px;background:#333333;"></div>
<div style="position:absolute;left:1087px;top:1020.7600000000001px;width:883px;height:1.7899999999999991px;background:#1f1f1f;"></div>
<div style="position:absolute;left:1087px;top:1022.5500000000001px;width:10px;height:22.6px;background:#2d2d2d;"></div>
<div style="position:absolute;left:1960px;top:1022.5500000000001px;width:10px;height:22.6px;background:#2d2d2d;"></div>
<div style="position:absolute;left:1087px;top:1045.15px;width:883px;height:1.7899999999999991px;background:#1f1f1f;"></div>
<div style="position:absolute;left:1087px;top:1046.94px;width:10px;height:22.6px;background:#2d2d2d;"></div>
<div style="position:absolute;left:1960px;top:1046.94px;width:10px;height:22.6px;background:#2d2d2d;"></div>
<div style="position:absolute;left:1097px;top:1046.94px;width:863px;height:22.6px;background:#333333;"></div>
<div style="position:absolute;left:1087px;top:1069.54px;width:883px;height:1.7899999999999991px;background:#1f1f1f;"></div>
<div style="position:absolute;left:1087px;top:1071.33px;width:10px;height:22.6px;background:#2d2d2d;"></div>
<div style="position:absolute;left:1960px;top:1071.33px;width:10px;height:22.6px;background:#2d2d2d;"></div>
<svg style="position:absolute;left:1097px;top:900.6px;" width="863" height="22.6" viewBox="0 0 863 22.6"><defs><filter id="nz" x="0" y="0" width="1" height="1"><feTurbulence type="fractalNoise" baseFrequency="0.9" numOctaves="2" seed="3"/><feColorMatrix values="0 0 0 0 0  0 0 0 0 0  0 0 0 0 0  0 0 0 0.13 0"/></filter></defs><rect width="863" height="22.6" fill="#a84a4c"/><rect width="863" height="22.6" filter="url(#nz)"/><rect width="863" height="1.3" fill="#d98a8a"/><rect width="1.3" height="22.6" fill="#d98a8a"/></svg>
<div style="position:absolute;left:1097px;top:973.77px;width:863px;height:22.6px;background:#566099;"></div>
<div style="position:absolute;left:1097px;top:1022.5500000000001px;width:863px;height:22.6px;background:#566099;"></div>
<div style="position:absolute;left:1097px;top:1071.33px;width:863px;height:22.6px;background:#7f3c3d;"></div>
<div style="position:absolute;left:1087px;top:1093.9299999999998px;width:10px;height:106.07000000000016px;background:#262626;"></div>
<div style="position:absolute;left:1097px;top:1093.9299999999998px;width:863px;height:106.07000000000016px;background:#343434;"></div>
<div style="position:absolute;left:1960px;top:1093.9299999999998px;width:10px;height:106.07000000000016px;background:#2d2d2d;"></div>
<div style="position:absolute;left:1241px;top:924.99px;width:36px;height:22.6px;background:#4b4b4b;"></div>
<div style="position:absolute;left:1241px;top:949.38px;width:36px;height:22.6px;background:#4b4b4b;"></div>
<div style="position:absolute;left:1241px;top:973.77px;width:36px;height:22.6px;background:rgba(255,255,255,0.06);"></div>
<div style="position:absolute;left:1241px;top:998.1600000000001px;width:36px;height:22.6px;background:#4b4b4b;"></div>
<div style="position:absolute;left:1241px;top:1022.5500000000001px;width:36px;height:22.6px;background:rgba(255,255,255,0.06);"></div>
<div style="position:absolute;left:1241px;top:1046.94px;width:36px;height:22.6px;background:#4b4b4b;"></div>
<div style="position:absolute;left:1241px;top:1071.33px;width:36px;height:22.6px;background:rgba(255,255,255,0.06);"></div>
<div style="position:absolute;left:1241px;top:1093.9299999999998px;width:36px;height:106.07000000000016px;background:#4f4f4f;"></div>
<svg style="position:absolute;left:1235px;top:930.29px;" width="12" height="12" viewBox="0 0 12 12"><path d="M6 0 L12 6 L6 12 L0 6z" fill="#7a7a7a"/></svg>
<svg style="position:absolute;left:1230px;top:950.18px;" width="22" height="21" viewBox="0 0 22 21"><path d="M11 1.5 L20 10.5 L11 19.5 L2 10.5z" fill="#6f6f6f" stroke="#2d8cf0" stroke-width="2.4" stroke-linejoin="round"/><path d="M11 4.5 L17 10.5 L11 16.5 L5 10.5z" fill="none" stroke="#103050" stroke-width="1"/></svg>
<svg style="position:absolute;left:1234.5px;top:1003.1600000000001px;" width="13" height="13" viewBox="0 0 13 13"><path d="M0 0 H13 Q13.2 2.2 9.8 4.2 Q8.3 5.3 8.3 6.5 Q8.3 7.7 9.8 8.8 Q13.2 10.8 13 13 H0 Q-0.2 10.8 3.2 8.8 Q4.7 7.7 4.7 6.5 Q4.7 5.3 3.2 4.2 Q-0.2 2.2 0 0z" fill="#bdbdbd"/></svg>
<svg style="position:absolute;left:1307.5px;top:1003.1600000000001px;" width="13" height="13" viewBox="0 0 13 13"><path d="M0 0 H13 Q13.2 2.2 9.8 4.2 Q8.3 5.3 8.3 6.5 Q8.3 7.7 9.8 8.8 Q13.2 10.8 13 13 H0 Q-0.2 10.8 3.2 8.8 Q4.7 7.7 4.7 6.5 Q4.7 5.3 3.2 4.2 Q-0.2 2.2 0 0z" fill="#bdbdbd"/></svg>
<svg style="position:absolute;left:1450.5px;top:1003.1600000000001px;" width="13" height="13" viewBox="0 0 13 13"><path d="M0 0 H13 Q13.2 2.2 9.8 4.2 Q8.3 5.3 8.3 6.5 Q8.3 7.7 9.8 8.8 Q13.2 10.8 13 13 H0 Q-0.2 10.8 3.2 8.8 Q4.7 7.7 4.7 6.5 Q4.7 5.3 3.2 4.2 Q-0.2 2.2 0 0z" fill="#bdbdbd"/></svg>
<svg style="position:absolute;left:1486.5px;top:1003.1600000000001px;" width="13" height="13" viewBox="0 0 13 13"><path d="M0 0 H13 Q13.2 2.2 9.8 4.2 Q8.3 5.3 8.3 6.5 Q8.3 7.7 9.8 8.8 Q13.2 10.8 13 13 H0 Q-0.2 10.8 3.2 8.8 Q4.7 7.7 4.7 6.5 Q4.7 5.3 3.2 4.2 Q-0.2 2.2 0 0z" fill="#bdbdbd"/></svg>
<svg style="position:absolute;left:1665.5px;top:1003.1600000000001px;" width="13" height="13" viewBox="0 0 13 13"><path d="M0 0 H13 Q13.2 2.2 9.8 4.2 Q8.3 5.3 8.3 6.5 Q8.3 7.7 9.8 8.8 Q13.2 10.8 13 13 H0 Q-0.2 10.8 3.2 8.8 Q4.7 7.7 4.7 6.5 Q4.7 5.3 3.2 4.2 Q-0.2 2.2 0 0z" fill="#bdbdbd"/></svg>
<svg style="position:absolute;left:1738.5px;top:1003.1600000000001px;" width="13" height="13" viewBox="0 0 13 13"><path d="M0 0 H13 Q13.2 2.2 9.8 4.2 Q8.3 5.3 8.3 6.5 Q8.3 7.7 9.8 8.8 Q13.2 10.8 13 13 H0 Q-0.2 10.8 3.2 8.8 Q4.7 7.7 4.7 6.5 Q4.7 5.3 3.2 4.2 Q-0.2 2.2 0 0z" fill="#bdbdbd"/></svg>
<svg style="position:absolute;left:1162.5px;top:1051.94px;" width="13" height="13" viewBox="0 0 13 13"><path d="M0 0 H13 Q13.2 2.2 9.8 4.2 Q8.3 5.3 8.3 6.5 Q8.3 7.7 9.8 8.8 Q13.2 10.8 13 13 H0 Q-0.2 10.8 3.2 8.8 Q4.7 7.7 4.7 6.5 Q4.7 5.3 3.2 4.2 Q-0.2 2.2 0 0z" fill="#bdbdbd"/></svg>
<svg style="position:absolute;left:1270.5px;top:1051.94px;" width="13" height="13" viewBox="0 0 13 13"><path d="M0 0 H13 Q13.2 2.2 9.8 4.2 Q8.3 5.3 8.3 6.5 Q8.3 7.7 9.8 8.8 Q13.2 10.8 13 13 H0 Q-0.2 10.8 3.2 8.8 Q4.7 7.7 4.7 6.5 Q4.7 5.3 3.2 4.2 Q-0.2 2.2 0 0z" fill="#bdbdbd"/></svg>
<svg style="position:absolute;left:1378.5px;top:1051.94px;" width="13" height="13" viewBox="0 0 13 13"><path d="M0 0 H13 Q13.2 2.2 9.8 4.2 Q8.3 5.3 8.3 6.5 Q8.3 7.7 9.8 8.8 Q13.2 10.8 13 13 H0 Q-0.2 10.8 3.2 8.8 Q4.7 7.7 4.7 6.5 Q4.7 5.3 3.2 4.2 Q-0.2 2.2 0 0z" fill="#bdbdbd"/></svg>
<svg style="position:absolute;left:1594.5px;top:1051.94px;" width="13" height="13" viewBox="0 0 13 13"><path d="M0 0 H13 Q13.2 2.2 9.8 4.2 Q8.3 5.3 8.3 6.5 Q8.3 7.7 9.8 8.8 Q13.2 10.8 13 13 H0 Q-0.2 10.8 3.2 8.8 Q4.7 7.7 4.7 6.5 Q4.7 5.3 3.2 4.2 Q-0.2 2.2 0 0z" fill="#bdbdbd"/></svg>
<svg style="position:absolute;left:1701.5px;top:1051.94px;" width="13" height="13" viewBox="0 0 13 13"><path d="M0 0 H13 Q13.2 2.2 9.8 4.2 Q8.3 5.3 8.3 6.5 Q8.3 7.7 9.8 8.8 Q13.2 10.8 13 13 H0 Q-0.2 10.8 3.2 8.8 Q4.7 7.7 4.7 6.5 Q4.7 5.3 3.2 4.2 Q-0.2 2.2 0 0z" fill="#bdbdbd"/></svg>
<svg style="position:absolute;left:1810.5px;top:1051.94px;" width="13" height="13" viewBox="0 0 13 13"><path d="M0 0 H13 Q13.2 2.2 9.8 4.2 Q8.3 5.3 8.3 6.5 Q8.3 7.7 9.8 8.8 Q13.2 10.8 13 13 H0 Q-0.2 10.8 3.2 8.8 Q4.7 7.7 4.7 6.5 Q4.7 5.3 3.2 4.2 Q-0.2 2.2 0 0z" fill="#bdbdbd"/></svg>
<div style="position:absolute;left:1240.5px;top:851px;width:1.6px;height:349px;background:#2d8cf0;"></div>
<svg style="position:absolute;left:1232.5px;top:850px;" width="18" height="20" viewBox="0 0 18 20"><path d="M0.5 2 Q0.5 0.5 2 0.5 H16 Q17.5 0.5 17.5 2 V9 L9 19.5 L0.5 9z" fill="#2d8cf0"/><path d="M6.5 9.5 H11.5 M9 9.5 V17" stroke="#0c2a4a" stroke-width="1.1"/></svg>
<div style="position:absolute;left:3px;top:1199.5px;width:1238px;height:2px;background:#0e0e0e;"></div>
<div style="position:absolute;left:3px;top:1201.5px;width:1238px;height:23px;background:#262626;"></div>
<div style="position:absolute;left:1241px;top:1198.5px;width:754px;height:26px;background:#212121;"></div>
<div style="position:absolute;left:1972px;top:1201.5px;width:23px;height:23px;background:#262626;"></div>
<div style="position:absolute;left:11px;top:1204px;width:22px;height:20px;background:#232323;box-shadow:inset 0 0 0 1px #2c2c2c;"></div>
<svg style="position:absolute;left:13px;top:1205px;" width="17" height="18" viewBox="0 0 17 18"><rect x="0.8" y="0.8" width="9" height="9" fill="none" stroke="#2d8cf0" stroke-width="1.3"/><rect x="3.8" y="3.8" width="9" height="9" fill="#262626" stroke="#2d8cf0" stroke-width="1.3"/><rect x="6.8" y="6.8" width="9" height="9" fill="#262626" stroke="#2d8cf0" stroke-width="1.3"/><rect x="10" y="10" width="2.5" height="2.5" fill="#2d8cf0"/></svg>
<div style="position:absolute;left:37px;top:1204px;width:22px;height:20px;background:#232323;box-shadow:inset 0 0 0 1px #2c2c2c;"></div>
<svg style="position:absolute;left:40px;top:1204px;" width="17" height="18" viewBox="0 0 17 18"><circle cx="6.5" cy="6.5" r="5.5" fill="none" stroke="#2d8cf0" stroke-width="1.5"/><rect x="7" y="7" width="9" height="9" fill="#262626" stroke="#2d8cf0" stroke-width="1.5"/><path d="M7 7 H12 A5.5 5.5 0 0 1 7 12z" fill="#2d8cf0"/></svg>
<svg style="position:absolute;left:67px;top:1205px;" width="17" height="16" viewBox="0 0 17 16"><path d="M5 1 Q2 1 2.5 4 L2.5 6.5 L0.5 8 L2.5 9.5 L2.5 12 Q2 15 5 15 M12 1 Q15 1 14.5 4 L14.5 6.5 L16.5 8 L14.5 9.5 L14.5 12 Q15 15 12 15" fill="none" stroke="#b3b3b3" stroke-width="1.5"/><rect x="7" y="3" width="3" height="11" fill="#555"/></svg>
<svg style="position:absolute;left:93px;top:1205px;" width="20" height="16" viewBox="0 0 20 16"><circle cx="8" cy="7" r="6.5" fill="#b3b3b3"/><rect x="0" y="12.5" width="14" height="3" fill="#b3b3b3"/><path d="M13 4 L15 1 M15.5 5 L18.5 2" stroke="#b3b3b3" stroke-width="1.2"/><circle cx="15" cy="1" r="1" fill="#b3b3b3"/><circle cx="18.5" cy="2" r="1" fill="#b3b3b3"/></svg>
<div class="t" style="left:151.54px;top:1205.30px;font-size:16.23px;font-weight:normal;color:#a8a8a8;transform:scaleX(0.9583);">Frame Render Time</div>
<div class="t" style="left:296.52px;top:1205.30px;font-size:16.23px;font-weight:bold;color:#50d4a4;transform:scaleX(0.9762);">14ms</div>
<svg style="position:absolute;left:1094px;top:1207px;" width="15" height="9" viewBox="0 0 15 9"><path d="M0 8.5 L5 3 L7 5 L9.5 0.5 L14.5 8.5z" fill="#b8b8b8"/></svg>
<svg style="position:absolute;left:1124px;top:1206px;" width="16" height="16" viewBox="0 0 16 16"><circle cx="7.5" cy="8" r="6" fill="none" stroke="#a8a8a8" stroke-width="2.2"/></svg>
<div style="position:absolute;left:1140px;top:1212.5px;width:53px;height:2px;background:#3e3e3e;"></div>
<svg style="position:absolute;left:1209.5px;top:1206px;" width="26" height="12" viewBox="0 0 26 12"><path d="M0 11.5 L4.5 5 L7.5 5 L3 11.5z M6.5 11.5 L15.5 0.5 L25 11.5z" fill="#b8b8b8"/></svg>
<div style="position:absolute;left:1.5px;top:781.3px;width:1995px;height:444.7px;background:transparent;box-shadow:inset 0 0 0 1.6px #2b80da;"></div>
</body></html>
